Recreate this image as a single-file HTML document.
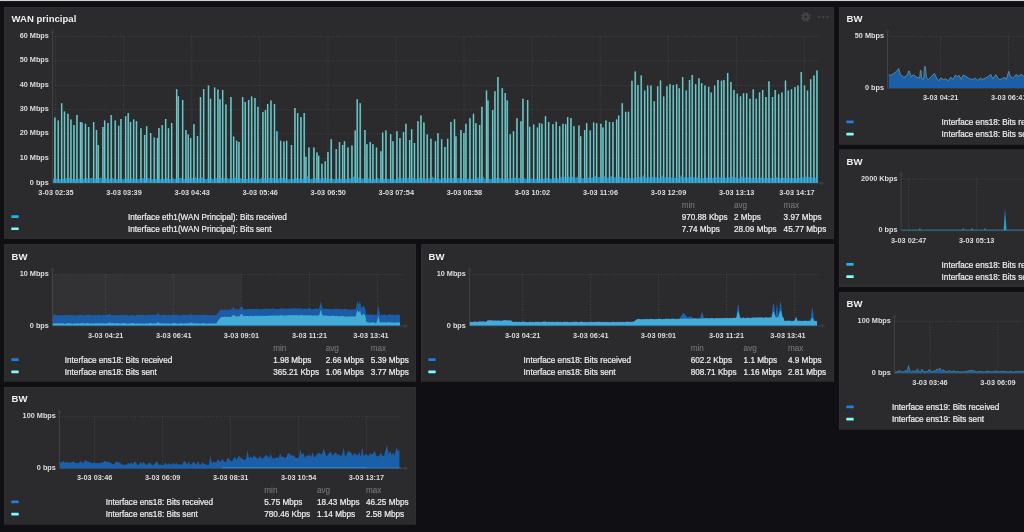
<!DOCTYPE html>
<html><head><meta charset="utf-8"><title>Dashboard</title>
<style>html,body{margin:0;padding:0;background:#100f13;overflow:hidden}svg{display:block;will-change:transform;transform:translateZ(0)}text{font-family:"Liberation Sans",sans-serif}</style></head>
<body>
<svg width="1024" height="532" viewBox="0 0 1024 532" font-family="Liberation Sans, sans-serif">
<rect x="0.00" y="0.00" width="1024.00" height="532.00" fill="#100f13" />
<rect x="0.00" y="0.00" width="1024.00" height="1.05" fill="#d2d0d4" />
<rect x="4.00" y="7.00" width="830.00" height="231.80" fill="#2b2a2d" />
<rect x="4.50" y="7.50" width="829.00" height="230.80" fill="none" stroke="#2f2e32" stroke-width="1"/>
<text x="11.60" y="22.10" font-size="9.55" fill="#f0f0f0" text-anchor="start" font-weight="bold" >WAN principal</text>
<circle cx="805.75" cy="16.9" r="3.5" fill="#454449"/>
<line x1="808.34" y1="17.97" x2="810.28" y2="18.78" stroke="#454449" stroke-width="1.7"/>
<line x1="806.82" y1="19.49" x2="807.63" y2="21.43" stroke="#454449" stroke-width="1.7"/>
<line x1="804.68" y1="19.49" x2="803.87" y2="21.43" stroke="#454449" stroke-width="1.7"/>
<line x1="803.16" y1="17.97" x2="801.22" y2="18.78" stroke="#454449" stroke-width="1.7"/>
<line x1="803.16" y1="15.83" x2="801.22" y2="15.02" stroke="#454449" stroke-width="1.7"/>
<line x1="804.68" y1="14.31" x2="803.87" y2="12.37" stroke="#454449" stroke-width="1.7"/>
<line x1="806.82" y1="14.31" x2="807.63" y2="12.37" stroke="#454449" stroke-width="1.7"/>
<line x1="808.34" y1="15.83" x2="810.28" y2="15.02" stroke="#454449" stroke-width="1.7"/>
<circle cx="805.75" cy="16.9" r="1.3" fill="#2b2a2d"/>
<circle cx="819.2" cy="17.0" r="1.25" fill="#41424a"/>
<circle cx="823.3" cy="17.0" r="1.25" fill="#41424a"/>
<circle cx="827.5" cy="17.0" r="1.25" fill="#41424a"/>
<line x1="52.60" y1="36.50" x2="818.00" y2="36.50" stroke="#4d4c50" stroke-width="0.8" stroke-dasharray="0.9 1.8"/>
<text x="48.90" y="37.90" font-size="7.32" fill="#dedede" text-anchor="end" font-weight="bold" >60 Mbps</text>
<line x1="52.60" y1="60.88" x2="818.00" y2="60.88" stroke="#4d4c50" stroke-width="0.8" stroke-dasharray="0.9 1.8"/>
<text x="48.90" y="62.28" font-size="7.32" fill="#dedede" text-anchor="end" font-weight="bold" >50 Mbps</text>
<line x1="52.60" y1="85.27" x2="818.00" y2="85.27" stroke="#4d4c50" stroke-width="0.8" stroke-dasharray="0.9 1.8"/>
<text x="48.90" y="86.67" font-size="7.32" fill="#dedede" text-anchor="end" font-weight="bold" >40 Mbps</text>
<line x1="52.60" y1="109.65" x2="818.00" y2="109.65" stroke="#4d4c50" stroke-width="0.8" stroke-dasharray="0.9 1.8"/>
<text x="48.90" y="111.05" font-size="7.32" fill="#dedede" text-anchor="end" font-weight="bold" >30 Mbps</text>
<line x1="52.60" y1="134.03" x2="818.00" y2="134.03" stroke="#4d4c50" stroke-width="0.8" stroke-dasharray="0.9 1.8"/>
<text x="48.90" y="135.43" font-size="7.32" fill="#dedede" text-anchor="end" font-weight="bold" >20 Mbps</text>
<line x1="52.60" y1="158.42" x2="818.00" y2="158.42" stroke="#4d4c50" stroke-width="0.8" stroke-dasharray="0.9 1.8"/>
<text x="48.90" y="159.82" font-size="7.32" fill="#dedede" text-anchor="end" font-weight="bold" >10 Mbps</text>
<text x="48.90" y="184.70" font-size="7.32" fill="#dedede" text-anchor="end" font-weight="bold" >0 bps</text>
<line x1="55.70" y1="36.50" x2="55.70" y2="182.80" stroke="#4d4c50" stroke-width="0.8" stroke-dasharray="0.9 1.8"/>
<line x1="123.76" y1="36.50" x2="123.76" y2="182.80" stroke="#4d4c50" stroke-width="0.8" stroke-dasharray="0.9 1.8"/>
<line x1="191.82" y1="36.50" x2="191.82" y2="182.80" stroke="#4d4c50" stroke-width="0.8" stroke-dasharray="0.9 1.8"/>
<line x1="259.88" y1="36.50" x2="259.88" y2="182.80" stroke="#4d4c50" stroke-width="0.8" stroke-dasharray="0.9 1.8"/>
<line x1="327.94" y1="36.50" x2="327.94" y2="182.80" stroke="#4d4c50" stroke-width="0.8" stroke-dasharray="0.9 1.8"/>
<line x1="396.00" y1="36.50" x2="396.00" y2="182.80" stroke="#4d4c50" stroke-width="0.8" stroke-dasharray="0.9 1.8"/>
<line x1="464.06" y1="36.50" x2="464.06" y2="182.80" stroke="#4d4c50" stroke-width="0.8" stroke-dasharray="0.9 1.8"/>
<line x1="532.12" y1="36.50" x2="532.12" y2="182.80" stroke="#4d4c50" stroke-width="0.8" stroke-dasharray="0.9 1.8"/>
<line x1="600.18" y1="36.50" x2="600.18" y2="182.80" stroke="#4d4c50" stroke-width="0.8" stroke-dasharray="0.9 1.8"/>
<line x1="668.24" y1="36.50" x2="668.24" y2="182.80" stroke="#4d4c50" stroke-width="0.8" stroke-dasharray="0.9 1.8"/>
<line x1="736.30" y1="36.50" x2="736.30" y2="182.80" stroke="#4d4c50" stroke-width="0.8" stroke-dasharray="0.9 1.8"/>
<line x1="804.36" y1="36.50" x2="804.36" y2="182.80" stroke="#4d4c50" stroke-width="0.8" stroke-dasharray="0.9 1.8"/>
<line x1="52.60" y1="31.50" x2="52.60" y2="183.30" stroke="#4a494d" stroke-width="0.8"/>
<path d="M51.00 32.30 L52.60 29.70 L54.20 32.30 Z" fill="#2b2a2d" stroke="#4a494d" stroke-width="0.6"/>
<line x1="52.60" y1="183.10" x2="822.00" y2="183.10" stroke="#4a494d" stroke-width="0.8"/>
<path d="M821.00 181.50 L823.80 183.10 L821.00 184.70 Z" fill="#2b2a2d" stroke="#4a494d" stroke-width="0.6"/>
<text x="56.00" y="194.90" font-size="7.32" fill="#dedede" text-anchor="middle" font-weight="bold" >3-03 02:35</text>
<text x="124.06" y="194.90" font-size="7.32" fill="#dedede" text-anchor="middle" font-weight="bold" >3-03 03:39</text>
<text x="192.12" y="194.90" font-size="7.32" fill="#dedede" text-anchor="middle" font-weight="bold" >3-03 04:43</text>
<text x="260.18" y="194.90" font-size="7.32" fill="#dedede" text-anchor="middle" font-weight="bold" >3-03 05:46</text>
<text x="328.24" y="194.90" font-size="7.32" fill="#dedede" text-anchor="middle" font-weight="bold" >3-03 06:50</text>
<text x="396.30" y="194.90" font-size="7.32" fill="#dedede" text-anchor="middle" font-weight="bold" >3-03 07:54</text>
<text x="464.36" y="194.90" font-size="7.32" fill="#dedede" text-anchor="middle" font-weight="bold" >3-03 08:58</text>
<text x="532.42" y="194.90" font-size="7.32" fill="#dedede" text-anchor="middle" font-weight="bold" >3-03 10:02</text>
<text x="600.48" y="194.90" font-size="7.32" fill="#dedede" text-anchor="middle" font-weight="bold" >3-03 11:06</text>
<text x="668.54" y="194.90" font-size="7.32" fill="#dedede" text-anchor="middle" font-weight="bold" >3-03 12:09</text>
<text x="736.60" y="194.90" font-size="7.32" fill="#dedede" text-anchor="middle" font-weight="bold" >3-03 13:13</text>
<text x="797.00" y="194.90" font-size="7.32" fill="#dedede" text-anchor="middle" font-weight="bold" >3-03 14:17</text>
<rect x="54.15" y="117.50" width="1.7" height="65.30" fill="#4a9fa2"/>
<rect x="54.55" y="117.50" width="0.7" height="65.30" fill="#86d6d4"/>
<rect x="57.40" y="120.50" width="1.7" height="62.30" fill="#4a9fa2"/>
<rect x="57.80" y="120.50" width="0.7" height="62.30" fill="#86d6d4"/>
<rect x="60.90" y="103.25" width="1.7" height="79.55" fill="#4a9fa2"/>
<rect x="61.30" y="103.25" width="0.7" height="79.55" fill="#86d6d4"/>
<rect x="63.65" y="111.50" width="1.7" height="71.30" fill="#4a9fa2"/>
<rect x="64.05" y="111.50" width="0.7" height="71.30" fill="#86d6d4"/>
<rect x="67.15" y="113.75" width="1.7" height="69.05" fill="#4a9fa2"/>
<rect x="67.55" y="113.75" width="0.7" height="69.05" fill="#86d6d4"/>
<rect x="70.15" y="119.50" width="1.7" height="63.30" fill="#4a9fa2"/>
<rect x="70.55" y="119.50" width="0.7" height="63.30" fill="#86d6d4"/>
<rect x="73.15" y="125.00" width="1.7" height="57.80" fill="#4a9fa2"/>
<rect x="73.55" y="125.00" width="0.7" height="57.80" fill="#86d6d4"/>
<rect x="76.15" y="115.00" width="1.7" height="67.80" fill="#4a9fa2"/>
<rect x="76.55" y="115.00" width="0.7" height="67.80" fill="#86d6d4"/>
<rect x="79.65" y="122.00" width="1.7" height="60.80" fill="#4a9fa2"/>
<rect x="80.05" y="122.00" width="0.7" height="60.80" fill="#86d6d4"/>
<rect x="81.15" y="122.50" width="1.7" height="60.30" fill="#4a9fa2"/>
<rect x="81.55" y="122.50" width="0.7" height="60.30" fill="#86d6d4"/>
<rect x="84.65" y="123.75" width="1.7" height="59.05" fill="#4a9fa2"/>
<rect x="85.05" y="123.75" width="0.7" height="59.05" fill="#86d6d4"/>
<rect x="87.90" y="127.00" width="1.7" height="55.80" fill="#4a9fa2"/>
<rect x="88.30" y="127.00" width="0.7" height="55.80" fill="#86d6d4"/>
<rect x="92.90" y="122.00" width="1.7" height="60.80" fill="#4a9fa2"/>
<rect x="93.30" y="122.00" width="0.7" height="60.80" fill="#86d6d4"/>
<rect x="95.65" y="130.00" width="1.7" height="52.80" fill="#4a9fa2"/>
<rect x="96.05" y="130.00" width="0.7" height="52.80" fill="#86d6d4"/>
<rect x="97.40" y="145.00" width="1.7" height="37.80" fill="#4a9fa2"/>
<rect x="97.80" y="145.00" width="0.7" height="37.80" fill="#86d6d4"/>
<rect x="102.15" y="127.00" width="1.7" height="55.80" fill="#4a9fa2"/>
<rect x="102.55" y="127.00" width="0.7" height="55.80" fill="#86d6d4"/>
<rect x="103.90" y="120.50" width="1.7" height="62.30" fill="#4a9fa2"/>
<rect x="104.30" y="120.50" width="0.7" height="62.30" fill="#86d6d4"/>
<rect x="107.15" y="123.00" width="1.7" height="59.80" fill="#4a9fa2"/>
<rect x="107.55" y="123.00" width="0.7" height="59.80" fill="#86d6d4"/>
<rect x="110.40" y="115.00" width="1.7" height="67.80" fill="#4a9fa2"/>
<rect x="110.80" y="115.00" width="0.7" height="67.80" fill="#86d6d4"/>
<rect x="114.40" y="120.50" width="1.7" height="62.30" fill="#4a9fa2"/>
<rect x="114.80" y="120.50" width="0.7" height="62.30" fill="#86d6d4"/>
<rect x="117.90" y="125.75" width="1.7" height="57.05" fill="#4a9fa2"/>
<rect x="118.30" y="125.75" width="0.7" height="57.05" fill="#86d6d4"/>
<rect x="120.15" y="119.00" width="1.7" height="63.80" fill="#4a9fa2"/>
<rect x="120.55" y="119.00" width="0.7" height="63.80" fill="#86d6d4"/>
<rect x="124.90" y="116.25" width="1.7" height="66.55" fill="#4a9fa2"/>
<rect x="125.30" y="116.25" width="0.7" height="66.55" fill="#86d6d4"/>
<rect x="127.40" y="113.00" width="1.7" height="69.80" fill="#4a9fa2"/>
<rect x="127.80" y="113.00" width="0.7" height="69.80" fill="#86d6d4"/>
<rect x="129.65" y="122.00" width="1.7" height="60.80" fill="#4a9fa2"/>
<rect x="130.05" y="122.00" width="0.7" height="60.80" fill="#86d6d4"/>
<rect x="132.90" y="119.50" width="1.7" height="63.30" fill="#4a9fa2"/>
<rect x="133.30" y="119.50" width="0.7" height="63.30" fill="#86d6d4"/>
<rect x="135.65" y="121.25" width="1.7" height="61.55" fill="#4a9fa2"/>
<rect x="136.05" y="121.25" width="0.7" height="61.55" fill="#86d6d4"/>
<rect x="140.15" y="128.25" width="1.7" height="54.55" fill="#4a9fa2"/>
<rect x="140.55" y="128.25" width="0.7" height="54.55" fill="#86d6d4"/>
<rect x="143.90" y="135.00" width="1.7" height="47.80" fill="#4a9fa2"/>
<rect x="144.30" y="135.00" width="0.7" height="47.80" fill="#86d6d4"/>
<rect x="145.90" y="126.25" width="1.7" height="56.55" fill="#4a9fa2"/>
<rect x="146.30" y="126.25" width="0.7" height="56.55" fill="#86d6d4"/>
<rect x="149.90" y="133.00" width="1.7" height="49.80" fill="#4a9fa2"/>
<rect x="150.30" y="133.00" width="0.7" height="49.80" fill="#86d6d4"/>
<rect x="153.40" y="137.50" width="1.7" height="45.30" fill="#4a9fa2"/>
<rect x="153.80" y="137.50" width="0.7" height="45.30" fill="#86d6d4"/>
<rect x="156.65" y="138.00" width="1.7" height="44.80" fill="#4a9fa2"/>
<rect x="157.05" y="138.00" width="0.7" height="44.80" fill="#86d6d4"/>
<rect x="158.15" y="128.00" width="1.7" height="54.80" fill="#4a9fa2"/>
<rect x="158.55" y="128.00" width="0.7" height="54.80" fill="#86d6d4"/>
<rect x="161.40" y="125.00" width="1.7" height="57.80" fill="#4a9fa2"/>
<rect x="161.80" y="125.00" width="0.7" height="57.80" fill="#86d6d4"/>
<rect x="164.90" y="119.00" width="1.7" height="63.80" fill="#4a9fa2"/>
<rect x="165.30" y="119.00" width="0.7" height="63.80" fill="#86d6d4"/>
<rect x="167.65" y="128.25" width="1.7" height="54.55" fill="#4a9fa2"/>
<rect x="168.05" y="128.25" width="0.7" height="54.55" fill="#86d6d4"/>
<rect x="170.90" y="123.00" width="1.7" height="59.80" fill="#4a9fa2"/>
<rect x="171.30" y="123.00" width="0.7" height="59.80" fill="#86d6d4"/>
<rect x="175.90" y="89.25" width="1.7" height="93.55" fill="#4a9fa2"/>
<rect x="176.30" y="89.25" width="0.7" height="93.55" fill="#86d6d4"/>
<rect x="177.40" y="96.25" width="1.7" height="86.55" fill="#4a9fa2"/>
<rect x="177.80" y="96.25" width="0.7" height="86.55" fill="#86d6d4"/>
<rect x="181.90" y="100.00" width="1.7" height="82.80" fill="#4a9fa2"/>
<rect x="182.30" y="100.00" width="0.7" height="82.80" fill="#86d6d4"/>
<rect x="185.15" y="130.00" width="1.7" height="52.80" fill="#4a9fa2"/>
<rect x="185.55" y="130.00" width="0.7" height="52.80" fill="#86d6d4"/>
<rect x="187.40" y="134.50" width="1.7" height="48.30" fill="#4a9fa2"/>
<rect x="187.80" y="134.50" width="0.7" height="48.30" fill="#86d6d4"/>
<rect x="189.90" y="138.00" width="1.7" height="44.80" fill="#4a9fa2"/>
<rect x="190.30" y="138.00" width="0.7" height="44.80" fill="#86d6d4"/>
<rect x="193.15" y="124.25" width="1.7" height="58.55" fill="#4a9fa2"/>
<rect x="193.55" y="124.25" width="0.7" height="58.55" fill="#86d6d4"/>
<rect x="196.65" y="136.00" width="1.7" height="46.80" fill="#4a9fa2"/>
<rect x="197.05" y="136.00" width="0.7" height="46.80" fill="#86d6d4"/>
<rect x="199.65" y="97.00" width="1.7" height="85.80" fill="#4a9fa2"/>
<rect x="200.05" y="97.00" width="0.7" height="85.80" fill="#86d6d4"/>
<rect x="202.90" y="89.00" width="1.7" height="93.80" fill="#4a9fa2"/>
<rect x="203.30" y="89.00" width="0.7" height="93.80" fill="#86d6d4"/>
<rect x="207.65" y="85.50" width="1.7" height="97.30" fill="#4a9fa2"/>
<rect x="208.05" y="85.50" width="0.7" height="97.30" fill="#86d6d4"/>
<rect x="209.65" y="98.75" width="1.7" height="84.05" fill="#4a9fa2"/>
<rect x="210.05" y="98.75" width="0.7" height="84.05" fill="#86d6d4"/>
<rect x="213.90" y="87.50" width="1.7" height="95.30" fill="#4a9fa2"/>
<rect x="214.30" y="87.50" width="0.7" height="95.30" fill="#86d6d4"/>
<rect x="217.15" y="89.50" width="1.7" height="93.30" fill="#4a9fa2"/>
<rect x="217.55" y="89.50" width="0.7" height="93.30" fill="#86d6d4"/>
<rect x="219.15" y="99.25" width="1.7" height="83.55" fill="#4a9fa2"/>
<rect x="219.55" y="99.25" width="0.7" height="83.55" fill="#86d6d4"/>
<rect x="221.90" y="90.00" width="1.7" height="92.80" fill="#4a9fa2"/>
<rect x="222.30" y="90.00" width="0.7" height="92.80" fill="#86d6d4"/>
<rect x="225.15" y="104.50" width="1.7" height="78.30" fill="#4a9fa2"/>
<rect x="225.55" y="104.50" width="0.7" height="78.30" fill="#86d6d4"/>
<rect x="230.15" y="97.00" width="1.7" height="85.80" fill="#4a9fa2"/>
<rect x="230.55" y="97.00" width="0.7" height="85.80" fill="#86d6d4"/>
<rect x="232.90" y="136.50" width="1.7" height="46.30" fill="#4a9fa2"/>
<rect x="233.30" y="136.50" width="0.7" height="46.30" fill="#86d6d4"/>
<rect x="235.90" y="140.75" width="1.7" height="42.05" fill="#4a9fa2"/>
<rect x="236.30" y="140.75" width="0.7" height="42.05" fill="#86d6d4"/>
<rect x="238.15" y="142.00" width="1.7" height="40.80" fill="#4a9fa2"/>
<rect x="238.55" y="142.00" width="0.7" height="40.80" fill="#86d6d4"/>
<rect x="241.90" y="97.00" width="1.7" height="85.80" fill="#4a9fa2"/>
<rect x="242.30" y="97.00" width="0.7" height="85.80" fill="#86d6d4"/>
<rect x="244.40" y="102.00" width="1.7" height="80.80" fill="#4a9fa2"/>
<rect x="244.80" y="102.00" width="0.7" height="80.80" fill="#86d6d4"/>
<rect x="247.90" y="100.00" width="1.7" height="82.80" fill="#4a9fa2"/>
<rect x="248.30" y="100.00" width="0.7" height="82.80" fill="#86d6d4"/>
<rect x="250.90" y="96.50" width="1.7" height="86.30" fill="#4a9fa2"/>
<rect x="251.30" y="96.50" width="0.7" height="86.30" fill="#86d6d4"/>
<rect x="254.15" y="98.00" width="1.7" height="84.80" fill="#4a9fa2"/>
<rect x="254.55" y="98.00" width="0.7" height="84.80" fill="#86d6d4"/>
<rect x="257.15" y="106.75" width="1.7" height="76.05" fill="#4a9fa2"/>
<rect x="257.55" y="106.75" width="0.7" height="76.05" fill="#86d6d4"/>
<rect x="262.15" y="112.00" width="1.7" height="70.80" fill="#4a9fa2"/>
<rect x="262.55" y="112.00" width="0.7" height="70.80" fill="#86d6d4"/>
<rect x="264.65" y="110.00" width="1.7" height="72.80" fill="#4a9fa2"/>
<rect x="265.05" y="110.00" width="0.7" height="72.80" fill="#86d6d4"/>
<rect x="266.90" y="104.00" width="1.7" height="78.80" fill="#4a9fa2"/>
<rect x="267.30" y="104.00" width="0.7" height="78.80" fill="#86d6d4"/>
<rect x="270.15" y="100.50" width="1.7" height="82.30" fill="#4a9fa2"/>
<rect x="270.55" y="100.50" width="0.7" height="82.30" fill="#86d6d4"/>
<rect x="273.65" y="104.00" width="1.7" height="78.80" fill="#4a9fa2"/>
<rect x="274.05" y="104.00" width="0.7" height="78.80" fill="#86d6d4"/>
<rect x="276.15" y="131.25" width="1.7" height="51.55" fill="#4a9fa2"/>
<rect x="276.55" y="131.25" width="0.7" height="51.55" fill="#86d6d4"/>
<rect x="279.90" y="140.75" width="1.7" height="42.05" fill="#4a9fa2"/>
<rect x="280.30" y="140.75" width="0.7" height="42.05" fill="#86d6d4"/>
<rect x="283.15" y="141.50" width="1.7" height="41.30" fill="#4a9fa2"/>
<rect x="283.55" y="141.50" width="0.7" height="41.30" fill="#86d6d4"/>
<rect x="285.90" y="140.75" width="1.7" height="42.05" fill="#4a9fa2"/>
<rect x="286.30" y="140.75" width="0.7" height="42.05" fill="#86d6d4"/>
<rect x="290.65" y="145.00" width="1.7" height="37.80" fill="#4a9fa2"/>
<rect x="291.05" y="145.00" width="0.7" height="37.80" fill="#86d6d4"/>
<rect x="294.15" y="108.00" width="1.7" height="74.80" fill="#4a9fa2"/>
<rect x="294.55" y="108.00" width="0.7" height="74.80" fill="#86d6d4"/>
<rect x="296.90" y="113.00" width="1.7" height="69.80" fill="#4a9fa2"/>
<rect x="297.30" y="113.00" width="0.7" height="69.80" fill="#86d6d4"/>
<rect x="300.15" y="117.00" width="1.7" height="65.80" fill="#4a9fa2"/>
<rect x="300.55" y="117.00" width="0.7" height="65.80" fill="#86d6d4"/>
<rect x="303.40" y="113.00" width="1.7" height="69.80" fill="#4a9fa2"/>
<rect x="303.80" y="113.00" width="0.7" height="69.80" fill="#86d6d4"/>
<rect x="305.15" y="156.75" width="1.7" height="26.05" fill="#4a9fa2"/>
<rect x="305.55" y="156.75" width="0.7" height="26.05" fill="#86d6d4"/>
<rect x="308.15" y="147.50" width="1.7" height="35.30" fill="#4a9fa2"/>
<rect x="308.55" y="147.50" width="0.7" height="35.30" fill="#86d6d4"/>
<rect x="313.15" y="147.50" width="1.7" height="35.30" fill="#4a9fa2"/>
<rect x="313.55" y="147.50" width="0.7" height="35.30" fill="#86d6d4"/>
<rect x="316.15" y="152.50" width="1.7" height="30.30" fill="#4a9fa2"/>
<rect x="316.55" y="152.50" width="0.7" height="30.30" fill="#86d6d4"/>
<rect x="317.90" y="155.75" width="1.7" height="27.05" fill="#4a9fa2"/>
<rect x="318.30" y="155.75" width="0.7" height="27.05" fill="#86d6d4"/>
<rect x="321.15" y="163.75" width="1.7" height="19.05" fill="#4a9fa2"/>
<rect x="321.55" y="163.75" width="0.7" height="19.05" fill="#86d6d4"/>
<rect x="324.40" y="161.25" width="1.7" height="21.55" fill="#4a9fa2"/>
<rect x="324.80" y="161.25" width="0.7" height="21.55" fill="#86d6d4"/>
<rect x="327.15" y="152.00" width="1.7" height="30.80" fill="#4a9fa2"/>
<rect x="327.55" y="152.00" width="0.7" height="30.80" fill="#86d6d4"/>
<rect x="330.40" y="139.25" width="1.7" height="43.55" fill="#4a9fa2"/>
<rect x="330.80" y="139.25" width="0.7" height="43.55" fill="#86d6d4"/>
<rect x="335.40" y="149.00" width="1.7" height="33.80" fill="#4a9fa2"/>
<rect x="335.80" y="149.00" width="0.7" height="33.80" fill="#86d6d4"/>
<rect x="338.65" y="142.00" width="1.7" height="40.80" fill="#4a9fa2"/>
<rect x="339.05" y="142.00" width="0.7" height="40.80" fill="#86d6d4"/>
<rect x="341.90" y="145.00" width="1.7" height="37.80" fill="#4a9fa2"/>
<rect x="342.30" y="145.00" width="0.7" height="37.80" fill="#86d6d4"/>
<rect x="343.65" y="141.25" width="1.7" height="41.55" fill="#4a9fa2"/>
<rect x="344.05" y="141.25" width="0.7" height="41.55" fill="#86d6d4"/>
<rect x="347.15" y="147.50" width="1.7" height="35.30" fill="#4a9fa2"/>
<rect x="347.55" y="147.50" width="0.7" height="35.30" fill="#86d6d4"/>
<rect x="351.15" y="145.50" width="1.7" height="37.30" fill="#4a9fa2"/>
<rect x="351.55" y="145.50" width="0.7" height="37.30" fill="#86d6d4"/>
<rect x="354.40" y="130.50" width="1.7" height="52.30" fill="#4a9fa2"/>
<rect x="354.80" y="130.50" width="0.7" height="52.30" fill="#86d6d4"/>
<rect x="356.40" y="99.25" width="1.7" height="83.55" fill="#4a9fa2"/>
<rect x="356.80" y="99.25" width="0.7" height="83.55" fill="#86d6d4"/>
<rect x="359.40" y="103.25" width="1.7" height="79.55" fill="#4a9fa2"/>
<rect x="359.80" y="103.25" width="0.7" height="79.55" fill="#86d6d4"/>
<rect x="364.15" y="130.00" width="1.7" height="52.80" fill="#4a9fa2"/>
<rect x="364.55" y="130.00" width="0.7" height="52.80" fill="#86d6d4"/>
<rect x="366.15" y="144.25" width="1.7" height="38.55" fill="#4a9fa2"/>
<rect x="366.55" y="144.25" width="0.7" height="38.55" fill="#86d6d4"/>
<rect x="369.40" y="142.00" width="1.7" height="40.80" fill="#4a9fa2"/>
<rect x="369.80" y="142.00" width="0.7" height="40.80" fill="#86d6d4"/>
<rect x="372.15" y="144.25" width="1.7" height="38.55" fill="#4a9fa2"/>
<rect x="372.55" y="144.25" width="0.7" height="38.55" fill="#86d6d4"/>
<rect x="375.65" y="147.50" width="1.7" height="35.30" fill="#4a9fa2"/>
<rect x="376.05" y="147.50" width="0.7" height="35.30" fill="#86d6d4"/>
<rect x="380.15" y="151.25" width="1.7" height="31.55" fill="#4a9fa2"/>
<rect x="380.55" y="151.25" width="0.7" height="31.55" fill="#86d6d4"/>
<rect x="381.90" y="132.50" width="1.7" height="50.30" fill="#4a9fa2"/>
<rect x="382.30" y="132.50" width="0.7" height="50.30" fill="#86d6d4"/>
<rect x="385.15" y="130.50" width="1.7" height="52.30" fill="#4a9fa2"/>
<rect x="385.55" y="130.50" width="0.7" height="52.30" fill="#86d6d4"/>
<rect x="389.90" y="134.25" width="1.7" height="48.55" fill="#4a9fa2"/>
<rect x="390.30" y="134.25" width="0.7" height="48.55" fill="#86d6d4"/>
<rect x="392.15" y="141.25" width="1.7" height="41.55" fill="#4a9fa2"/>
<rect x="392.55" y="141.25" width="0.7" height="41.55" fill="#86d6d4"/>
<rect x="396.15" y="131.25" width="1.7" height="51.55" fill="#4a9fa2"/>
<rect x="396.55" y="131.25" width="0.7" height="51.55" fill="#86d6d4"/>
<rect x="399.15" y="138.00" width="1.7" height="44.80" fill="#4a9fa2"/>
<rect x="399.55" y="138.00" width="0.7" height="44.80" fill="#86d6d4"/>
<rect x="402.65" y="132.00" width="1.7" height="50.80" fill="#4a9fa2"/>
<rect x="403.05" y="132.00" width="0.7" height="50.80" fill="#86d6d4"/>
<rect x="405.15" y="123.75" width="1.7" height="59.05" fill="#4a9fa2"/>
<rect x="405.55" y="123.75" width="0.7" height="59.05" fill="#86d6d4"/>
<rect x="408.90" y="140.00" width="1.7" height="42.80" fill="#4a9fa2"/>
<rect x="409.30" y="140.00" width="0.7" height="42.80" fill="#86d6d4"/>
<rect x="410.90" y="129.25" width="1.7" height="53.55" fill="#4a9fa2"/>
<rect x="411.30" y="129.25" width="0.7" height="53.55" fill="#86d6d4"/>
<rect x="413.65" y="143.00" width="1.7" height="39.80" fill="#4a9fa2"/>
<rect x="414.05" y="143.00" width="0.7" height="39.80" fill="#86d6d4"/>
<rect x="417.15" y="121.25" width="1.7" height="61.55" fill="#4a9fa2"/>
<rect x="417.55" y="121.25" width="0.7" height="61.55" fill="#86d6d4"/>
<rect x="420.15" y="115.50" width="1.7" height="67.30" fill="#4a9fa2"/>
<rect x="420.55" y="115.50" width="0.7" height="67.30" fill="#86d6d4"/>
<rect x="423.15" y="122.50" width="1.7" height="60.30" fill="#4a9fa2"/>
<rect x="423.55" y="122.50" width="0.7" height="60.30" fill="#86d6d4"/>
<rect x="426.40" y="134.50" width="1.7" height="48.30" fill="#4a9fa2"/>
<rect x="426.80" y="134.50" width="0.7" height="48.30" fill="#86d6d4"/>
<rect x="430.15" y="138.75" width="1.7" height="44.05" fill="#4a9fa2"/>
<rect x="430.55" y="138.75" width="0.7" height="44.05" fill="#86d6d4"/>
<rect x="434.65" y="141.25" width="1.7" height="41.55" fill="#4a9fa2"/>
<rect x="435.05" y="141.25" width="0.7" height="41.55" fill="#86d6d4"/>
<rect x="437.15" y="133.25" width="1.7" height="49.55" fill="#4a9fa2"/>
<rect x="437.55" y="133.25" width="0.7" height="49.55" fill="#86d6d4"/>
<rect x="440.90" y="139.25" width="1.7" height="43.55" fill="#4a9fa2"/>
<rect x="441.30" y="139.25" width="0.7" height="43.55" fill="#86d6d4"/>
<rect x="444.15" y="147.00" width="1.7" height="35.80" fill="#4a9fa2"/>
<rect x="444.55" y="147.00" width="0.7" height="35.80" fill="#86d6d4"/>
<rect x="446.90" y="138.75" width="1.7" height="44.05" fill="#4a9fa2"/>
<rect x="447.30" y="138.75" width="0.7" height="44.05" fill="#86d6d4"/>
<rect x="450.15" y="122.00" width="1.7" height="60.80" fill="#4a9fa2"/>
<rect x="450.55" y="122.00" width="0.7" height="60.80" fill="#86d6d4"/>
<rect x="453.65" y="119.25" width="1.7" height="63.55" fill="#4a9fa2"/>
<rect x="454.05" y="119.25" width="0.7" height="63.55" fill="#86d6d4"/>
<rect x="455.15" y="136.25" width="1.7" height="46.55" fill="#4a9fa2"/>
<rect x="455.55" y="136.25" width="0.7" height="46.55" fill="#86d6d4"/>
<rect x="460.15" y="130.00" width="1.7" height="52.80" fill="#4a9fa2"/>
<rect x="460.55" y="130.00" width="0.7" height="52.80" fill="#86d6d4"/>
<rect x="463.15" y="133.00" width="1.7" height="49.80" fill="#4a9fa2"/>
<rect x="463.55" y="133.00" width="0.7" height="49.80" fill="#86d6d4"/>
<rect x="465.15" y="123.75" width="1.7" height="59.05" fill="#4a9fa2"/>
<rect x="465.55" y="123.75" width="0.7" height="59.05" fill="#86d6d4"/>
<rect x="469.15" y="118.25" width="1.7" height="64.55" fill="#4a9fa2"/>
<rect x="469.55" y="118.25" width="0.7" height="64.55" fill="#86d6d4"/>
<rect x="472.65" y="113.75" width="1.7" height="69.05" fill="#4a9fa2"/>
<rect x="473.05" y="113.75" width="0.7" height="69.05" fill="#86d6d4"/>
<rect x="475.15" y="123.25" width="1.7" height="59.55" fill="#4a9fa2"/>
<rect x="475.55" y="123.25" width="0.7" height="59.55" fill="#86d6d4"/>
<rect x="478.90" y="125.00" width="1.7" height="57.80" fill="#4a9fa2"/>
<rect x="479.30" y="125.00" width="0.7" height="57.80" fill="#86d6d4"/>
<rect x="481.15" y="106.75" width="1.7" height="76.05" fill="#4a9fa2"/>
<rect x="481.55" y="106.75" width="0.7" height="76.05" fill="#86d6d4"/>
<rect x="485.65" y="90.50" width="1.7" height="92.30" fill="#4a9fa2"/>
<rect x="486.05" y="90.50" width="0.7" height="92.30" fill="#86d6d4"/>
<rect x="487.15" y="100.50" width="1.7" height="82.30" fill="#4a9fa2"/>
<rect x="487.55" y="100.50" width="0.7" height="82.30" fill="#86d6d4"/>
<rect x="491.90" y="110.00" width="1.7" height="72.80" fill="#4a9fa2"/>
<rect x="492.30" y="110.00" width="0.7" height="72.80" fill="#86d6d4"/>
<rect x="494.15" y="91.25" width="1.7" height="91.55" fill="#4a9fa2"/>
<rect x="494.55" y="91.25" width="0.7" height="91.55" fill="#86d6d4"/>
<rect x="497.15" y="77.00" width="1.7" height="105.80" fill="#4a9fa2"/>
<rect x="497.55" y="77.00" width="0.7" height="105.80" fill="#86d6d4"/>
<rect x="501.40" y="88.25" width="1.7" height="94.55" fill="#4a9fa2"/>
<rect x="501.80" y="88.25" width="0.7" height="94.55" fill="#86d6d4"/>
<rect x="504.40" y="93.00" width="1.7" height="89.80" fill="#4a9fa2"/>
<rect x="504.80" y="93.00" width="0.7" height="89.80" fill="#86d6d4"/>
<rect x="506.40" y="100.50" width="1.7" height="82.30" fill="#4a9fa2"/>
<rect x="506.80" y="100.50" width="0.7" height="82.30" fill="#86d6d4"/>
<rect x="509.40" y="134.25" width="1.7" height="48.55" fill="#4a9fa2"/>
<rect x="509.80" y="134.25" width="0.7" height="48.55" fill="#86d6d4"/>
<rect x="512.65" y="131.25" width="1.7" height="51.55" fill="#4a9fa2"/>
<rect x="513.05" y="131.25" width="0.7" height="51.55" fill="#86d6d4"/>
<rect x="516.15" y="118.25" width="1.7" height="64.55" fill="#4a9fa2"/>
<rect x="516.55" y="118.25" width="0.7" height="64.55" fill="#86d6d4"/>
<rect x="520.15" y="121.25" width="1.7" height="61.55" fill="#4a9fa2"/>
<rect x="520.55" y="121.25" width="0.7" height="61.55" fill="#86d6d4"/>
<rect x="522.15" y="98.75" width="1.7" height="84.05" fill="#4a9fa2"/>
<rect x="522.55" y="98.75" width="0.7" height="84.05" fill="#86d6d4"/>
<rect x="526.90" y="100.00" width="1.7" height="82.80" fill="#4a9fa2"/>
<rect x="527.30" y="100.00" width="0.7" height="82.80" fill="#86d6d4"/>
<rect x="528.90" y="126.75" width="1.7" height="56.05" fill="#4a9fa2"/>
<rect x="529.30" y="126.75" width="0.7" height="56.05" fill="#86d6d4"/>
<rect x="532.90" y="124.50" width="1.7" height="58.30" fill="#4a9fa2"/>
<rect x="533.30" y="124.50" width="0.7" height="58.30" fill="#86d6d4"/>
<rect x="536.65" y="127.50" width="1.7" height="55.30" fill="#4a9fa2"/>
<rect x="537.05" y="127.50" width="0.7" height="55.30" fill="#86d6d4"/>
<rect x="538.65" y="123.00" width="1.7" height="59.80" fill="#4a9fa2"/>
<rect x="539.05" y="123.00" width="0.7" height="59.80" fill="#86d6d4"/>
<rect x="541.15" y="123.75" width="1.7" height="59.05" fill="#4a9fa2"/>
<rect x="541.55" y="123.75" width="0.7" height="59.05" fill="#86d6d4"/>
<rect x="544.65" y="116.25" width="1.7" height="66.55" fill="#4a9fa2"/>
<rect x="545.05" y="116.25" width="0.7" height="66.55" fill="#86d6d4"/>
<rect x="547.90" y="122.00" width="1.7" height="60.80" fill="#4a9fa2"/>
<rect x="548.30" y="122.00" width="0.7" height="60.80" fill="#86d6d4"/>
<rect x="552.15" y="124.25" width="1.7" height="58.55" fill="#4a9fa2"/>
<rect x="552.55" y="124.25" width="0.7" height="58.55" fill="#86d6d4"/>
<rect x="555.40" y="121.75" width="1.7" height="61.05" fill="#4a9fa2"/>
<rect x="555.80" y="121.75" width="0.7" height="61.05" fill="#86d6d4"/>
<rect x="558.90" y="126.25" width="1.7" height="56.55" fill="#4a9fa2"/>
<rect x="559.30" y="126.25" width="0.7" height="56.55" fill="#86d6d4"/>
<rect x="562.15" y="123.75" width="1.7" height="59.05" fill="#4a9fa2"/>
<rect x="562.55" y="123.75" width="0.7" height="59.05" fill="#86d6d4"/>
<rect x="564.90" y="124.25" width="1.7" height="58.55" fill="#4a9fa2"/>
<rect x="565.30" y="124.25" width="0.7" height="58.55" fill="#86d6d4"/>
<rect x="566.90" y="117.00" width="1.7" height="65.80" fill="#4a9fa2"/>
<rect x="567.30" y="117.00" width="0.7" height="65.80" fill="#86d6d4"/>
<rect x="570.15" y="118.00" width="1.7" height="64.80" fill="#4a9fa2"/>
<rect x="570.55" y="118.00" width="0.7" height="64.80" fill="#86d6d4"/>
<rect x="573.15" y="126.25" width="1.7" height="56.55" fill="#4a9fa2"/>
<rect x="573.55" y="126.25" width="0.7" height="56.55" fill="#86d6d4"/>
<rect x="578.15" y="125.50" width="1.7" height="57.30" fill="#4a9fa2"/>
<rect x="578.55" y="125.50" width="0.7" height="57.30" fill="#86d6d4"/>
<rect x="579.90" y="136.25" width="1.7" height="46.55" fill="#4a9fa2"/>
<rect x="580.30" y="136.25" width="0.7" height="46.55" fill="#86d6d4"/>
<rect x="583.90" y="130.00" width="1.7" height="52.80" fill="#4a9fa2"/>
<rect x="584.30" y="130.00" width="0.7" height="52.80" fill="#86d6d4"/>
<rect x="585.90" y="123.25" width="1.7" height="59.55" fill="#4a9fa2"/>
<rect x="586.30" y="123.25" width="0.7" height="59.55" fill="#86d6d4"/>
<rect x="589.40" y="130.50" width="1.7" height="52.30" fill="#4a9fa2"/>
<rect x="589.80" y="130.50" width="0.7" height="52.30" fill="#86d6d4"/>
<rect x="592.90" y="122.50" width="1.7" height="60.30" fill="#4a9fa2"/>
<rect x="593.30" y="122.50" width="0.7" height="60.30" fill="#86d6d4"/>
<rect x="595.90" y="123.25" width="1.7" height="59.55" fill="#4a9fa2"/>
<rect x="596.30" y="123.25" width="0.7" height="59.55" fill="#86d6d4"/>
<rect x="600.15" y="123.75" width="1.7" height="59.05" fill="#4a9fa2"/>
<rect x="600.55" y="123.75" width="0.7" height="59.05" fill="#86d6d4"/>
<rect x="602.15" y="127.50" width="1.7" height="55.30" fill="#4a9fa2"/>
<rect x="602.55" y="127.50" width="0.7" height="55.30" fill="#86d6d4"/>
<rect x="605.15" y="120.50" width="1.7" height="62.30" fill="#4a9fa2"/>
<rect x="605.55" y="120.50" width="0.7" height="62.30" fill="#86d6d4"/>
<rect x="608.65" y="122.00" width="1.7" height="60.80" fill="#4a9fa2"/>
<rect x="609.05" y="122.00" width="0.7" height="60.80" fill="#86d6d4"/>
<rect x="612.15" y="122.00" width="1.7" height="60.80" fill="#4a9fa2"/>
<rect x="612.55" y="122.00" width="0.7" height="60.80" fill="#86d6d4"/>
<rect x="615.90" y="119.50" width="1.7" height="63.30" fill="#4a9fa2"/>
<rect x="616.30" y="119.50" width="0.7" height="63.30" fill="#86d6d4"/>
<rect x="617.90" y="115.50" width="1.7" height="67.30" fill="#4a9fa2"/>
<rect x="618.30" y="115.50" width="0.7" height="67.30" fill="#86d6d4"/>
<rect x="621.40" y="103.25" width="1.7" height="79.55" fill="#4a9fa2"/>
<rect x="621.80" y="103.25" width="0.7" height="79.55" fill="#86d6d4"/>
<rect x="624.90" y="111.75" width="1.7" height="71.05" fill="#4a9fa2"/>
<rect x="625.30" y="111.75" width="0.7" height="71.05" fill="#86d6d4"/>
<rect x="627.65" y="111.75" width="1.7" height="71.05" fill="#4a9fa2"/>
<rect x="628.05" y="111.75" width="0.7" height="71.05" fill="#86d6d4"/>
<rect x="631.15" y="80.75" width="1.7" height="102.05" fill="#4a9fa2"/>
<rect x="631.55" y="80.75" width="0.7" height="102.05" fill="#86d6d4"/>
<rect x="634.40" y="71.50" width="1.7" height="111.30" fill="#4a9fa2"/>
<rect x="634.80" y="71.50" width="0.7" height="111.30" fill="#86d6d4"/>
<rect x="637.15" y="85.00" width="1.7" height="97.80" fill="#4a9fa2"/>
<rect x="637.55" y="85.00" width="0.7" height="97.80" fill="#86d6d4"/>
<rect x="640.40" y="75.50" width="1.7" height="107.30" fill="#4a9fa2"/>
<rect x="640.80" y="75.50" width="0.7" height="107.30" fill="#86d6d4"/>
<rect x="643.90" y="90.50" width="1.7" height="92.30" fill="#4a9fa2"/>
<rect x="644.30" y="90.50" width="0.7" height="92.30" fill="#86d6d4"/>
<rect x="646.90" y="85.50" width="1.7" height="97.30" fill="#4a9fa2"/>
<rect x="647.30" y="85.50" width="0.7" height="97.30" fill="#86d6d4"/>
<rect x="650.15" y="85.50" width="1.7" height="97.30" fill="#4a9fa2"/>
<rect x="650.55" y="85.50" width="0.7" height="97.30" fill="#86d6d4"/>
<rect x="653.40" y="101.25" width="1.7" height="81.55" fill="#4a9fa2"/>
<rect x="653.80" y="101.25" width="0.7" height="81.55" fill="#86d6d4"/>
<rect x="656.90" y="86.25" width="1.7" height="96.55" fill="#4a9fa2"/>
<rect x="657.30" y="86.25" width="0.7" height="96.55" fill="#86d6d4"/>
<rect x="659.65" y="80.50" width="1.7" height="102.30" fill="#4a9fa2"/>
<rect x="660.05" y="80.50" width="0.7" height="102.30" fill="#86d6d4"/>
<rect x="662.90" y="96.50" width="1.7" height="86.30" fill="#4a9fa2"/>
<rect x="663.30" y="96.50" width="0.7" height="86.30" fill="#86d6d4"/>
<rect x="666.15" y="86.25" width="1.7" height="96.55" fill="#4a9fa2"/>
<rect x="666.55" y="86.25" width="0.7" height="96.55" fill="#86d6d4"/>
<rect x="669.15" y="84.25" width="1.7" height="98.55" fill="#4a9fa2"/>
<rect x="669.55" y="84.25" width="0.7" height="98.55" fill="#86d6d4"/>
<rect x="672.40" y="85.00" width="1.7" height="97.80" fill="#4a9fa2"/>
<rect x="672.80" y="85.00" width="0.7" height="97.80" fill="#86d6d4"/>
<rect x="675.90" y="84.25" width="1.7" height="98.55" fill="#4a9fa2"/>
<rect x="676.30" y="84.25" width="0.7" height="98.55" fill="#86d6d4"/>
<rect x="678.40" y="88.25" width="1.7" height="94.55" fill="#4a9fa2"/>
<rect x="678.80" y="88.25" width="0.7" height="94.55" fill="#86d6d4"/>
<rect x="681.90" y="77.00" width="1.7" height="105.80" fill="#4a9fa2"/>
<rect x="682.30" y="77.00" width="0.7" height="105.80" fill="#86d6d4"/>
<rect x="685.40" y="90.50" width="1.7" height="92.30" fill="#4a9fa2"/>
<rect x="685.80" y="90.50" width="0.7" height="92.30" fill="#86d6d4"/>
<rect x="688.65" y="80.00" width="1.7" height="102.80" fill="#4a9fa2"/>
<rect x="689.05" y="80.00" width="0.7" height="102.80" fill="#86d6d4"/>
<rect x="691.40" y="75.00" width="1.7" height="107.80" fill="#4a9fa2"/>
<rect x="691.80" y="75.00" width="0.7" height="107.80" fill="#86d6d4"/>
<rect x="694.90" y="84.25" width="1.7" height="98.55" fill="#4a9fa2"/>
<rect x="695.30" y="84.25" width="0.7" height="98.55" fill="#86d6d4"/>
<rect x="698.15" y="78.25" width="1.7" height="104.55" fill="#4a9fa2"/>
<rect x="698.55" y="78.25" width="0.7" height="104.55" fill="#86d6d4"/>
<rect x="700.90" y="83.25" width="1.7" height="99.55" fill="#4a9fa2"/>
<rect x="701.30" y="83.25" width="0.7" height="99.55" fill="#86d6d4"/>
<rect x="704.15" y="85.50" width="1.7" height="97.30" fill="#4a9fa2"/>
<rect x="704.55" y="85.50" width="0.7" height="97.30" fill="#86d6d4"/>
<rect x="707.90" y="86.75" width="1.7" height="96.05" fill="#4a9fa2"/>
<rect x="708.30" y="86.75" width="0.7" height="96.05" fill="#86d6d4"/>
<rect x="710.40" y="92.50" width="1.7" height="90.30" fill="#4a9fa2"/>
<rect x="710.80" y="92.50" width="0.7" height="90.30" fill="#86d6d4"/>
<rect x="713.90" y="85.50" width="1.7" height="97.30" fill="#4a9fa2"/>
<rect x="714.30" y="85.50" width="0.7" height="97.30" fill="#86d6d4"/>
<rect x="717.15" y="80.00" width="1.7" height="102.80" fill="#4a9fa2"/>
<rect x="717.55" y="80.00" width="0.7" height="102.80" fill="#86d6d4"/>
<rect x="720.65" y="80.75" width="1.7" height="102.05" fill="#4a9fa2"/>
<rect x="721.05" y="80.75" width="0.7" height="102.05" fill="#86d6d4"/>
<rect x="723.15" y="80.00" width="1.7" height="102.80" fill="#4a9fa2"/>
<rect x="723.55" y="80.00" width="0.7" height="102.80" fill="#86d6d4"/>
<rect x="726.90" y="73.00" width="1.7" height="109.80" fill="#4a9fa2"/>
<rect x="727.30" y="73.00" width="0.7" height="109.80" fill="#86d6d4"/>
<rect x="730.15" y="82.00" width="1.7" height="100.80" fill="#4a9fa2"/>
<rect x="730.55" y="82.00" width="0.7" height="100.80" fill="#86d6d4"/>
<rect x="733.15" y="90.00" width="1.7" height="92.80" fill="#4a9fa2"/>
<rect x="733.55" y="90.00" width="0.7" height="92.80" fill="#86d6d4"/>
<rect x="736.40" y="93.75" width="1.7" height="89.05" fill="#4a9fa2"/>
<rect x="736.80" y="93.75" width="0.7" height="89.05" fill="#86d6d4"/>
<rect x="739.65" y="96.25" width="1.7" height="86.55" fill="#4a9fa2"/>
<rect x="740.05" y="96.25" width="0.7" height="86.55" fill="#86d6d4"/>
<rect x="742.65" y="93.25" width="1.7" height="89.55" fill="#4a9fa2"/>
<rect x="743.05" y="93.25" width="0.7" height="89.55" fill="#86d6d4"/>
<rect x="745.90" y="93.25" width="1.7" height="89.55" fill="#4a9fa2"/>
<rect x="746.30" y="93.25" width="0.7" height="89.55" fill="#86d6d4"/>
<rect x="749.15" y="98.75" width="1.7" height="84.05" fill="#4a9fa2"/>
<rect x="749.55" y="98.75" width="0.7" height="84.05" fill="#86d6d4"/>
<rect x="752.40" y="89.25" width="1.7" height="93.55" fill="#4a9fa2"/>
<rect x="752.80" y="89.25" width="0.7" height="93.55" fill="#86d6d4"/>
<rect x="755.40" y="98.75" width="1.7" height="84.05" fill="#4a9fa2"/>
<rect x="755.80" y="98.75" width="0.7" height="84.05" fill="#86d6d4"/>
<rect x="758.65" y="92.50" width="1.7" height="90.30" fill="#4a9fa2"/>
<rect x="759.05" y="92.50" width="0.7" height="90.30" fill="#86d6d4"/>
<rect x="761.90" y="90.00" width="1.7" height="92.80" fill="#4a9fa2"/>
<rect x="762.30" y="90.00" width="0.7" height="92.80" fill="#86d6d4"/>
<rect x="765.15" y="97.00" width="1.7" height="85.80" fill="#4a9fa2"/>
<rect x="765.55" y="97.00" width="0.7" height="85.80" fill="#86d6d4"/>
<rect x="768.15" y="81.25" width="1.7" height="101.55" fill="#4a9fa2"/>
<rect x="768.55" y="81.25" width="0.7" height="101.55" fill="#86d6d4"/>
<rect x="771.65" y="97.00" width="1.7" height="85.80" fill="#4a9fa2"/>
<rect x="772.05" y="97.00" width="0.7" height="85.80" fill="#86d6d4"/>
<rect x="774.40" y="90.00" width="1.7" height="92.80" fill="#4a9fa2"/>
<rect x="774.80" y="90.00" width="0.7" height="92.80" fill="#86d6d4"/>
<rect x="777.90" y="94.25" width="1.7" height="88.55" fill="#4a9fa2"/>
<rect x="778.30" y="94.25" width="0.7" height="88.55" fill="#86d6d4"/>
<rect x="781.15" y="92.50" width="1.7" height="90.30" fill="#4a9fa2"/>
<rect x="781.55" y="92.50" width="0.7" height="90.30" fill="#86d6d4"/>
<rect x="784.65" y="80.50" width="1.7" height="102.30" fill="#4a9fa2"/>
<rect x="785.05" y="80.50" width="0.7" height="102.30" fill="#86d6d4"/>
<rect x="787.40" y="90.50" width="1.7" height="92.30" fill="#4a9fa2"/>
<rect x="787.80" y="90.50" width="0.7" height="92.30" fill="#86d6d4"/>
<rect x="790.65" y="89.25" width="1.7" height="93.55" fill="#4a9fa2"/>
<rect x="791.05" y="89.25" width="0.7" height="93.55" fill="#86d6d4"/>
<rect x="794.15" y="87.00" width="1.7" height="95.80" fill="#4a9fa2"/>
<rect x="794.55" y="87.00" width="0.7" height="95.80" fill="#86d6d4"/>
<rect x="797.15" y="85.50" width="1.7" height="97.30" fill="#4a9fa2"/>
<rect x="797.55" y="85.50" width="0.7" height="97.30" fill="#86d6d4"/>
<rect x="800.40" y="72.00" width="1.7" height="110.80" fill="#4a9fa2"/>
<rect x="800.80" y="72.00" width="0.7" height="110.80" fill="#86d6d4"/>
<rect x="803.65" y="85.50" width="1.7" height="97.30" fill="#4a9fa2"/>
<rect x="804.05" y="85.50" width="0.7" height="97.30" fill="#86d6d4"/>
<rect x="806.65" y="90.50" width="1.7" height="92.30" fill="#4a9fa2"/>
<rect x="807.05" y="90.50" width="0.7" height="92.30" fill="#86d6d4"/>
<rect x="809.90" y="79.25" width="1.7" height="103.55" fill="#4a9fa2"/>
<rect x="810.30" y="79.25" width="0.7" height="103.55" fill="#86d6d4"/>
<rect x="813.15" y="75.50" width="1.7" height="107.30" fill="#4a9fa2"/>
<rect x="813.55" y="75.50" width="0.7" height="107.30" fill="#86d6d4"/>
<rect x="816.15" y="70.50" width="1.7" height="112.30" fill="#4a9fa2"/>
<rect x="816.55" y="70.50" width="0.7" height="112.30" fill="#86d6d4"/>
<path d="M53.00 183.00 L53.00 178.72 L54.60 178.13 L56.20 178.34 L57.80 179.20 L59.40 179.23 L61.00 179.17 L62.60 178.54 L64.20 179.08 L65.80 178.17 L67.40 178.26 L69.00 177.54 L70.60 177.75 L72.20 179.04 L73.80 178.74 L75.40 178.97 L77.00 178.15 L78.60 178.31 L80.20 179.19 L81.80 178.08 L83.40 178.73 L85.00 178.48 L86.60 177.87 L88.20 178.86 L89.80 178.35 L91.40 177.99 L93.00 177.54 L94.60 178.55 L96.20 179.03 L97.80 179.23 L99.40 177.92 L101.00 177.72 L102.60 178.05 L104.20 178.26 L105.80 177.79 L107.40 178.45 L109.00 179.19 L110.60 178.14 L112.20 177.82 L113.80 178.61 L115.40 179.26 L117.00 179.00 L118.60 179.19 L120.20 179.07 L121.80 178.60 L123.40 179.15 L125.00 178.31 L126.60 177.83 L128.20 178.80 L129.80 178.65 L131.40 177.58 L133.00 178.98 L134.60 178.88 L136.20 178.24 L137.80 179.29 L139.40 178.64 L141.00 177.58 L142.60 178.37 L144.20 178.08 L145.80 177.68 L147.40 177.73 L149.00 178.59 L150.60 179.11 L152.20 179.19 L153.80 178.92 L155.40 178.69 L157.00 179.30 L158.60 179.12 L160.20 179.25 L161.80 178.19 L163.40 178.85 L165.00 178.64 L166.60 177.77 L168.20 178.46 L169.80 179.15 L171.40 178.68 L173.00 177.81 L174.60 179.26 L176.20 178.35 L177.80 176.32 L179.40 178.35 L181.00 177.75 L182.60 178.83 L184.20 179.00 L185.80 178.34 L187.40 178.71 L189.00 177.84 L190.60 177.77 L192.20 177.83 L193.80 178.89 L195.40 176.66 L197.00 179.25 L198.60 178.83 L200.20 177.58 L201.80 177.61 L203.40 177.58 L205.00 178.90 L206.60 178.95 L208.20 178.18 L209.80 177.79 L211.40 178.12 L213.00 179.15 L214.60 177.66 L216.20 177.95 L217.80 178.98 L219.40 178.70 L221.00 177.55 L222.60 178.58 L224.20 178.00 L225.80 179.07 L227.40 177.67 L229.00 179.04 L230.60 177.54 L232.20 178.67 L233.80 177.06 L235.40 177.55 L237.00 178.35 L238.60 178.52 L240.20 177.81 L241.80 178.85 L243.40 178.87 L245.00 178.83 L246.60 179.06 L248.20 178.66 L249.80 178.25 L251.40 178.54 L253.00 178.40 L254.60 176.36 L256.20 178.51 L257.80 179.29 L259.40 178.99 L261.00 177.99 L262.60 178.71 L264.20 178.30 L265.80 179.11 L267.40 178.85 L269.00 177.91 L270.60 178.29 L272.20 177.66 L273.80 178.20 L275.40 178.38 L277.00 178.49 L278.60 178.44 L280.20 178.04 L281.80 177.60 L283.40 178.29 L285.00 177.79 L286.60 179.08 L288.20 179.17 L289.80 179.17 L291.40 177.89 L293.00 179.02 L294.60 178.11 L296.20 177.71 L297.80 178.90 L299.40 178.58 L301.00 177.52 L302.60 179.01 L304.20 178.37 L305.80 178.95 L307.40 176.00 L309.00 178.30 L310.60 179.27 L312.20 178.18 L313.80 179.18 L315.40 177.88 L317.00 179.11 L318.60 179.23 L320.20 178.81 L321.80 178.54 L323.40 177.83 L325.00 179.03 L326.60 178.27 L328.20 179.14 L329.80 178.06 L331.40 179.17 L333.00 178.16 L334.60 179.15 L336.20 179.18 L337.80 178.48 L339.40 178.30 L341.00 178.82 L342.60 178.35 L344.20 179.10 L345.80 179.21 L347.40 178.74 L349.00 177.93 L350.60 178.40 L352.20 176.68 L353.80 176.85 L355.40 177.98 L357.00 178.96 L358.60 177.62 L360.20 177.83 L361.80 178.41 L363.40 178.59 L365.00 178.06 L366.60 178.68 L368.20 178.03 L369.80 178.57 L371.40 179.20 L373.00 179.17 L374.60 178.84 L376.20 179.15 L377.80 177.73 L379.40 178.79 L381.00 178.77 L382.60 179.02 L384.20 178.83 L385.80 177.55 L387.40 178.86 L389.00 178.74 L390.60 179.30 L392.20 178.45 L393.80 178.94 L395.40 179.29 L397.00 179.14 L398.60 177.22 L400.20 178.75 L401.80 178.25 L403.40 177.95 L405.00 178.01 L406.60 178.60 L408.20 177.53 L409.80 178.00 L411.40 179.22 L413.00 177.69 L414.60 177.98 L416.20 179.05 L417.80 178.39 L419.40 177.85 L421.00 178.25 L422.60 178.07 L424.20 176.89 L425.80 179.06 L427.40 179.11 L429.00 178.29 L430.60 178.17 L432.20 176.42 L433.80 177.86 L435.40 178.39 L437.00 178.11 L438.60 177.97 L440.20 179.17 L441.80 177.99 L443.40 177.97 L445.00 178.41 L446.60 178.44 L448.20 177.92 L449.80 178.14 L451.40 179.03 L453.00 177.96 L454.60 176.28 L456.20 179.19 L457.80 178.09 L459.40 178.08 L461.00 178.37 L462.60 178.46 L464.20 177.69 L465.80 177.54 L467.40 179.27 L469.00 177.82 L470.60 178.49 L472.20 178.92 L473.80 178.92 L475.40 179.04 L477.00 177.59 L478.60 177.82 L480.20 177.70 L481.80 178.88 L483.40 176.42 L485.00 179.29 L486.60 178.49 L488.20 179.05 L489.80 178.73 L491.40 179.30 L493.00 177.79 L494.60 177.63 L496.20 177.68 L497.80 178.63 L499.40 177.50 L501.00 178.65 L502.60 178.80 L504.20 179.12 L505.80 178.79 L507.40 178.85 L509.00 178.38 L510.60 178.63 L512.20 177.71 L513.80 178.16 L515.40 177.61 L517.00 178.00 L518.60 177.98 L520.20 177.95 L521.80 178.78 L523.40 177.63 L525.00 178.45 L526.60 178.76 L528.20 177.54 L529.80 178.12 L531.40 178.30 L533.00 179.00 L534.60 178.93 L536.20 178.41 L537.80 177.67 L539.40 178.49 L541.00 178.95 L542.60 178.68 L544.20 178.87 L545.80 178.27 L547.40 177.95 L549.00 178.56 L550.60 178.62 L552.20 179.19 L553.80 177.56 L555.40 178.39 L557.00 177.75 L558.60 178.81 L560.20 177.78 L561.80 176.78 L563.40 174.93 L565.00 178.44 L566.60 176.89 L568.20 175.44 L569.80 177.80 L571.40 177.01 L573.00 176.75 L574.60 178.30 L576.20 177.56 L577.80 176.81 L579.40 177.33 L581.00 177.68 L582.60 178.43 L584.20 178.08 L585.80 177.34 L587.40 178.27 L589.00 177.35 L590.60 178.30 L592.20 177.56 L593.80 177.80 L595.40 175.42 L597.00 177.96 L598.60 176.77 L600.20 176.91 L601.80 178.08 L603.40 176.77 L605.00 175.95 L606.60 177.60 L608.20 177.74 L609.80 177.30 L611.40 176.09 L613.00 177.89 L614.60 177.27 L616.20 177.07 L617.80 177.59 L619.40 176.75 L621.00 177.02 L622.60 178.10 L624.20 177.97 L625.80 177.61 L627.40 178.10 L629.00 177.30 L630.60 178.24 L632.20 178.12 L633.80 178.24 L635.40 178.39 L637.00 176.88 L638.60 177.18 L640.20 176.82 L641.80 178.17 L643.40 175.16 L645.00 177.30 L646.60 177.83 L648.20 176.20 L649.80 178.00 L651.40 176.78 L653.00 176.76 L654.60 177.86 L656.20 177.02 L657.80 178.41 L659.40 177.83 L661.00 178.15 L662.60 174.89 L664.20 177.76 L665.80 177.12 L667.40 178.44 L669.00 176.84 L670.60 177.15 L672.20 177.89 L673.80 176.78 L675.40 178.03 L677.00 177.93 L678.60 178.49 L680.20 176.85 L681.80 174.80 L683.40 178.08 L685.00 176.78 L686.60 177.80 L688.20 177.73 L689.80 176.83 L691.40 177.06 L693.00 177.02 L694.60 177.41 L696.20 177.92 L697.80 177.09 L699.40 178.14 L701.00 178.05 L702.60 178.44 L704.20 177.91 L705.80 176.91 L707.40 178.02 L709.00 178.33 L710.60 177.22 L712.20 178.08 L713.80 177.38 L715.40 177.15 L717.00 177.30 L718.60 176.99 L720.20 177.48 L721.80 177.17 L723.40 178.05 L725.00 178.22 L726.60 177.46 L728.20 177.79 L729.80 177.59 L731.40 177.04 L733.00 176.72 L734.60 177.65 L736.20 176.99 L737.80 178.43 L739.40 178.29 L741.00 176.75 L742.60 176.83 L744.20 176.94 L745.80 178.03 L747.40 176.80 L749.00 177.43 L750.60 178.11 L752.20 178.25 L753.80 178.04 L755.40 177.33 L757.00 178.48 L758.60 177.28 L760.20 177.94 L761.80 177.07 L763.40 178.39 L765.00 177.79 L766.60 177.35 L768.20 178.21 L769.80 177.76 L771.40 177.95 L773.00 177.94 L774.60 177.86 L776.20 176.94 L777.80 177.85 L779.40 177.19 L781.00 178.49 L782.60 177.74 L784.20 177.77 L785.80 177.67 L787.40 178.47 L789.00 177.35 L790.60 178.34 L792.20 177.83 L793.80 178.24 L795.40 177.56 L797.00 178.30 L798.60 177.05 L800.20 178.14 L801.80 176.80 L803.40 177.63 L805.00 176.83 L806.60 176.87 L808.20 177.02 L809.80 177.09 L811.40 177.77 L813.00 177.01 L814.60 178.11 L816.20 177.57 L817.80 178.28 L817.80 183.00 Z" fill="#2eaae0" fill-opacity="0.72"/>
<rect x="11.30" y="215.25" width="7.40" height="2.70" fill="#19b5ef" rx="0.6"/>
<rect x="11.30" y="227.40" width="7.40" height="2.70" fill="#7ffcff" rx="0.6"/>
<text x="128.00" y="219.60" font-size="8.16" fill="#ececec" text-anchor="start" font-weight="normal"  stroke="#ececec" stroke-width="0.22">Interface eth1(WAN Principal): Bits received</text>
<text x="128.00" y="232.00" font-size="8.16" fill="#ececec" text-anchor="start" font-weight="normal"  stroke="#ececec" stroke-width="0.22">Interface eth1(WAN Principal): Bits sent</text>
<text x="681.70" y="207.60" font-size="8.16" fill="#767579" text-anchor="start" font-weight="normal"  stroke="#767579" stroke-width="0.12">min</text>
<text x="734.00" y="207.60" font-size="8.16" fill="#767579" text-anchor="start" font-weight="normal"  stroke="#767579" stroke-width="0.12">avg</text>
<text x="783.60" y="207.60" font-size="8.16" fill="#767579" text-anchor="start" font-weight="normal"  stroke="#767579" stroke-width="0.12">max</text>
<text x="681.70" y="219.60" font-size="8.16" fill="#ececec" text-anchor="start" font-weight="normal"  stroke="#ececec" stroke-width="0.22">970.88 Kbps</text>
<text x="734.00" y="219.60" font-size="8.16" fill="#ececec" text-anchor="start" font-weight="normal"  stroke="#ececec" stroke-width="0.22">2 Mbps</text>
<text x="783.60" y="219.60" font-size="8.16" fill="#ececec" text-anchor="start" font-weight="normal"  stroke="#ececec" stroke-width="0.22">3.97 Mbps</text>
<text x="681.70" y="232.00" font-size="8.16" fill="#ececec" text-anchor="start" font-weight="normal"  stroke="#ececec" stroke-width="0.22">7.74 Mbps</text>
<text x="734.00" y="232.00" font-size="8.16" fill="#ececec" text-anchor="start" font-weight="normal"  stroke="#ececec" stroke-width="0.22">28.09 Mbps</text>
<text x="783.60" y="232.00" font-size="8.16" fill="#ececec" text-anchor="start" font-weight="normal"  stroke="#ececec" stroke-width="0.22">45.77 Mbps</text>
<rect x="4.00" y="244.00" width="412.00" height="137.50" fill="#2b2a2d" />
<rect x="4.50" y="244.50" width="411.00" height="136.50" fill="none" stroke="#2f2e32" stroke-width="1"/>
<text x="11.60" y="259.70" font-size="9.55" fill="#f0f0f0" text-anchor="start" font-weight="bold" >BW</text>
<line x1="52.40" y1="274.40" x2="402.00" y2="274.40" stroke="#4d4c50" stroke-width="0.8" stroke-dasharray="0.9 1.8"/>
<text x="48.90" y="275.80" font-size="7.32" fill="#dedede" text-anchor="end" font-weight="bold" >10 Mbps</text>
<text x="48.90" y="327.50" font-size="7.32" fill="#dedede" text-anchor="end" font-weight="bold" >0 bps</text>
<line x1="105.50" y1="274.40" x2="105.50" y2="325.60" stroke="#4d4c50" stroke-width="0.8" stroke-dasharray="0.9 1.8"/>
<text x="105.70" y="337.90" font-size="7.32" fill="#dedede" text-anchor="middle" font-weight="bold" >3-03 04:21</text>
<line x1="173.50" y1="274.40" x2="173.50" y2="325.60" stroke="#4d4c50" stroke-width="0.8" stroke-dasharray="0.9 1.8"/>
<text x="173.80" y="337.90" font-size="7.32" fill="#dedede" text-anchor="middle" font-weight="bold" >3-03 06:41</text>
<line x1="241.50" y1="274.40" x2="241.50" y2="325.60" stroke="#4d4c50" stroke-width="0.8" stroke-dasharray="0.9 1.8"/>
<text x="241.50" y="337.90" font-size="7.32" fill="#dedede" text-anchor="middle" font-weight="bold" >3-03 09:01</text>
<line x1="309.50" y1="274.40" x2="309.50" y2="325.60" stroke="#4d4c50" stroke-width="0.8" stroke-dasharray="0.9 1.8"/>
<text x="309.50" y="337.90" font-size="7.32" fill="#dedede" text-anchor="middle" font-weight="bold" >3-03 11:21</text>
<line x1="377.50" y1="274.40" x2="377.50" y2="325.60" stroke="#4d4c50" stroke-width="0.8" stroke-dasharray="0.9 1.8"/>
<text x="371.00" y="337.90" font-size="7.32" fill="#dedede" text-anchor="middle" font-weight="bold" >3-03 13:41</text>
<line x1="52.40" y1="269.40" x2="52.40" y2="326.10" stroke="#4a494d" stroke-width="0.8"/>
<path d="M50.80 270.20 L52.40 267.60 L54.00 270.20 Z" fill="#2b2a2d" stroke="#4a494d" stroke-width="0.6"/>
<line x1="52.40" y1="325.90" x2="406.00" y2="325.90" stroke="#4a494d" stroke-width="0.8"/>
<path d="M405.00 324.30 L407.80 325.90 L405.00 327.50 Z" fill="#2b2a2d" stroke="#4a494d" stroke-width="0.6"/>
<rect x="11.30" y="358.20" width="7.40" height="2.70" fill="#1f7fe0" rx="0.6"/>
<rect x="11.30" y="370.45" width="7.40" height="2.70" fill="#7ffcff" rx="0.6"/>
<text x="64.80" y="362.60" font-size="8.16" fill="#ececec" text-anchor="start" font-weight="normal"  stroke="#ececec" stroke-width="0.22">Interface ens18: Bits received</text>
<text x="64.80" y="374.85" font-size="8.16" fill="#ececec" text-anchor="start" font-weight="normal"  stroke="#ececec" stroke-width="0.22">Interface ens18: Bits sent</text>
<text x="273.20" y="350.50" font-size="8.16" fill="#767579" text-anchor="start" font-weight="normal"  stroke="#767579" stroke-width="0.12">min</text>
<text x="325.70" y="350.50" font-size="8.16" fill="#767579" text-anchor="start" font-weight="normal"  stroke="#767579" stroke-width="0.12">avg</text>
<text x="370.70" y="350.50" font-size="8.16" fill="#767579" text-anchor="start" font-weight="normal"  stroke="#767579" stroke-width="0.12">max</text>
<text x="273.20" y="362.60" font-size="8.16" fill="#ececec" text-anchor="start" font-weight="normal"  stroke="#ececec" stroke-width="0.22">1.98 Mbps</text>
<text x="325.70" y="362.60" font-size="8.16" fill="#ececec" text-anchor="start" font-weight="normal"  stroke="#ececec" stroke-width="0.22">2.66 Mbps</text>
<text x="370.70" y="362.60" font-size="8.16" fill="#ececec" text-anchor="start" font-weight="normal"  stroke="#ececec" stroke-width="0.22">5.39 Mbps</text>
<text x="273.20" y="374.85" font-size="8.16" fill="#ececec" text-anchor="start" font-weight="normal"  stroke="#ececec" stroke-width="0.22">365.21 Kbps</text>
<text x="325.70" y="374.85" font-size="8.16" fill="#ececec" text-anchor="start" font-weight="normal"  stroke="#ececec" stroke-width="0.22">1.06 Mbps</text>
<text x="370.70" y="374.85" font-size="8.16" fill="#ececec" text-anchor="start" font-weight="normal"  stroke="#ececec" stroke-width="0.22">3.77 Mbps</text>
<rect x="421.00" y="244.00" width="413.00" height="137.50" fill="#2b2a2d" />
<rect x="421.50" y="244.50" width="412.00" height="136.50" fill="none" stroke="#2f2e32" stroke-width="1"/>
<text x="428.60" y="259.70" font-size="9.55" fill="#f0f0f0" text-anchor="start" font-weight="bold" >BW</text>
<line x1="469.40" y1="274.40" x2="819.00" y2="274.40" stroke="#4d4c50" stroke-width="0.8" stroke-dasharray="0.9 1.8"/>
<text x="465.90" y="275.80" font-size="7.32" fill="#dedede" text-anchor="end" font-weight="bold" >10 Mbps</text>
<text x="465.90" y="327.50" font-size="7.32" fill="#dedede" text-anchor="end" font-weight="bold" >0 bps</text>
<line x1="522.50" y1="274.40" x2="522.50" y2="325.60" stroke="#4d4c50" stroke-width="0.8" stroke-dasharray="0.9 1.8"/>
<text x="522.70" y="337.90" font-size="7.32" fill="#dedede" text-anchor="middle" font-weight="bold" >3-03 04:21</text>
<line x1="590.50" y1="274.40" x2="590.50" y2="325.60" stroke="#4d4c50" stroke-width="0.8" stroke-dasharray="0.9 1.8"/>
<text x="590.80" y="337.90" font-size="7.32" fill="#dedede" text-anchor="middle" font-weight="bold" >3-03 06:41</text>
<line x1="658.50" y1="274.40" x2="658.50" y2="325.60" stroke="#4d4c50" stroke-width="0.8" stroke-dasharray="0.9 1.8"/>
<text x="658.50" y="337.90" font-size="7.32" fill="#dedede" text-anchor="middle" font-weight="bold" >3-03 09:01</text>
<line x1="726.50" y1="274.40" x2="726.50" y2="325.60" stroke="#4d4c50" stroke-width="0.8" stroke-dasharray="0.9 1.8"/>
<text x="726.50" y="337.90" font-size="7.32" fill="#dedede" text-anchor="middle" font-weight="bold" >3-03 11:21</text>
<line x1="794.50" y1="274.40" x2="794.50" y2="325.60" stroke="#4d4c50" stroke-width="0.8" stroke-dasharray="0.9 1.8"/>
<text x="788.00" y="337.90" font-size="7.32" fill="#dedede" text-anchor="middle" font-weight="bold" >3-03 13:41</text>
<line x1="469.40" y1="269.40" x2="469.40" y2="326.10" stroke="#4a494d" stroke-width="0.8"/>
<path d="M467.80 270.20 L469.40 267.60 L471.00 270.20 Z" fill="#2b2a2d" stroke="#4a494d" stroke-width="0.6"/>
<line x1="469.40" y1="325.90" x2="823.00" y2="325.90" stroke="#4a494d" stroke-width="0.8"/>
<path d="M822.00 324.30 L824.80 325.90 L822.00 327.50 Z" fill="#2b2a2d" stroke="#4a494d" stroke-width="0.6"/>
<rect x="428.30" y="358.20" width="7.40" height="2.70" fill="#1f7fe0" rx="0.6"/>
<rect x="428.30" y="370.45" width="7.40" height="2.70" fill="#7ffcff" rx="0.6"/>
<text x="523.60" y="362.60" font-size="8.16" fill="#ececec" text-anchor="start" font-weight="normal"  stroke="#ececec" stroke-width="0.22">Interface ens18: Bits received</text>
<text x="523.60" y="374.85" font-size="8.16" fill="#ececec" text-anchor="start" font-weight="normal"  stroke="#ececec" stroke-width="0.22">Interface ens18: Bits sent</text>
<text x="690.70" y="350.50" font-size="8.16" fill="#767579" text-anchor="start" font-weight="normal"  stroke="#767579" stroke-width="0.12">min</text>
<text x="743.60" y="350.50" font-size="8.16" fill="#767579" text-anchor="start" font-weight="normal"  stroke="#767579" stroke-width="0.12">avg</text>
<text x="788.00" y="350.50" font-size="8.16" fill="#767579" text-anchor="start" font-weight="normal"  stroke="#767579" stroke-width="0.12">max</text>
<text x="690.70" y="362.60" font-size="8.16" fill="#ececec" text-anchor="start" font-weight="normal"  stroke="#ececec" stroke-width="0.22">602.2 Kbps</text>
<text x="743.60" y="362.60" font-size="8.16" fill="#ececec" text-anchor="start" font-weight="normal"  stroke="#ececec" stroke-width="0.22">1.1 Mbps</text>
<text x="788.00" y="362.60" font-size="8.16" fill="#ececec" text-anchor="start" font-weight="normal"  stroke="#ececec" stroke-width="0.22">4.9 Mbps</text>
<text x="690.70" y="374.85" font-size="8.16" fill="#ececec" text-anchor="start" font-weight="normal"  stroke="#ececec" stroke-width="0.22">808.71 Kbps</text>
<text x="743.60" y="374.85" font-size="8.16" fill="#ececec" text-anchor="start" font-weight="normal"  stroke="#ececec" stroke-width="0.22">1.16 Mbps</text>
<text x="788.00" y="374.85" font-size="8.16" fill="#ececec" text-anchor="start" font-weight="normal"  stroke="#ececec" stroke-width="0.22">2.81 Mbps</text>
<rect x="4.00" y="387.00" width="412.00" height="137.50" fill="#2b2a2d" />
<rect x="4.50" y="387.50" width="411.00" height="136.50" fill="none" stroke="#2f2e32" stroke-width="1"/>
<text x="11.60" y="402.10" font-size="9.55" fill="#f0f0f0" text-anchor="start" font-weight="bold" >BW</text>
<line x1="59.40" y1="416.70" x2="402.00" y2="416.70" stroke="#4d4c50" stroke-width="0.8" stroke-dasharray="0.9 1.8"/>
<text x="55.90" y="418.10" font-size="7.32" fill="#dedede" text-anchor="end" font-weight="bold" >100 Mbps</text>
<text x="55.90" y="470.00" font-size="7.32" fill="#dedede" text-anchor="end" font-weight="bold" >0 bps</text>
<line x1="94.50" y1="416.70" x2="94.50" y2="468.10" stroke="#4d4c50" stroke-width="0.8" stroke-dasharray="0.9 1.8"/>
<text x="94.70" y="480.40" font-size="7.32" fill="#dedede" text-anchor="middle" font-weight="bold" >3-03 03:46</text>
<line x1="162.50" y1="416.70" x2="162.50" y2="468.10" stroke="#4d4c50" stroke-width="0.8" stroke-dasharray="0.9 1.8"/>
<text x="162.70" y="480.40" font-size="7.32" fill="#dedede" text-anchor="middle" font-weight="bold" >3-03 06:09</text>
<line x1="230.50" y1="416.70" x2="230.50" y2="468.10" stroke="#4d4c50" stroke-width="0.8" stroke-dasharray="0.9 1.8"/>
<text x="230.60" y="480.40" font-size="7.32" fill="#dedede" text-anchor="middle" font-weight="bold" >3-03 08:31</text>
<line x1="298.50" y1="416.70" x2="298.50" y2="468.10" stroke="#4d4c50" stroke-width="0.8" stroke-dasharray="0.9 1.8"/>
<text x="298.60" y="480.40" font-size="7.32" fill="#dedede" text-anchor="middle" font-weight="bold" >3-03 10:54</text>
<line x1="366.50" y1="416.70" x2="366.50" y2="468.10" stroke="#4d4c50" stroke-width="0.8" stroke-dasharray="0.9 1.8"/>
<text x="366.50" y="480.40" font-size="7.32" fill="#dedede" text-anchor="middle" font-weight="bold" >3-03 13:17</text>
<line x1="59.40" y1="411.70" x2="59.40" y2="468.60" stroke="#4a494d" stroke-width="0.8"/>
<path d="M57.80 412.50 L59.40 409.90 L61.00 412.50 Z" fill="#2b2a2d" stroke="#4a494d" stroke-width="0.6"/>
<line x1="59.40" y1="468.40" x2="406.00" y2="468.40" stroke="#4a494d" stroke-width="0.8"/>
<path d="M405.00 466.80 L407.80 468.40 L405.00 470.00 Z" fill="#2b2a2d" stroke="#4a494d" stroke-width="0.6"/>
<rect x="11.30" y="500.60" width="7.40" height="2.70" fill="#1f7fe0" rx="0.6"/>
<rect x="11.30" y="512.85" width="7.40" height="2.70" fill="#7ffcff" rx="0.6"/>
<text x="105.70" y="505.00" font-size="8.16" fill="#ececec" text-anchor="start" font-weight="normal"  stroke="#ececec" stroke-width="0.22">Interface ens18: Bits received</text>
<text x="105.70" y="517.25" font-size="8.16" fill="#ececec" text-anchor="start" font-weight="normal"  stroke="#ececec" stroke-width="0.22">Interface ens18: Bits sent</text>
<text x="264.30" y="492.90" font-size="8.16" fill="#767579" text-anchor="start" font-weight="normal"  stroke="#767579" stroke-width="0.12">min</text>
<text x="317.00" y="492.90" font-size="8.16" fill="#767579" text-anchor="start" font-weight="normal"  stroke="#767579" stroke-width="0.12">avg</text>
<text x="366.00" y="492.90" font-size="8.16" fill="#767579" text-anchor="start" font-weight="normal"  stroke="#767579" stroke-width="0.12">max</text>
<text x="264.30" y="505.00" font-size="8.16" fill="#ececec" text-anchor="start" font-weight="normal"  stroke="#ececec" stroke-width="0.22">5.75 Mbps</text>
<text x="317.00" y="505.00" font-size="8.16" fill="#ececec" text-anchor="start" font-weight="normal"  stroke="#ececec" stroke-width="0.22">18.43 Mbps</text>
<text x="366.00" y="505.00" font-size="8.16" fill="#ececec" text-anchor="start" font-weight="normal"  stroke="#ececec" stroke-width="0.22">46.25 Mbps</text>
<text x="264.30" y="517.25" font-size="8.16" fill="#ececec" text-anchor="start" font-weight="normal"  stroke="#ececec" stroke-width="0.22">780.46 Kbps</text>
<text x="317.00" y="517.25" font-size="8.16" fill="#ececec" text-anchor="start" font-weight="normal"  stroke="#ececec" stroke-width="0.22">1.14 Mbps</text>
<text x="366.00" y="517.25" font-size="8.16" fill="#ececec" text-anchor="start" font-weight="normal"  stroke="#ececec" stroke-width="0.22">2.58 Mbps</text>
<rect x="839.00" y="7.00" width="200.00" height="137.50" fill="#2b2a2d" />
<rect x="839.50" y="7.50" width="199.00" height="136.50" fill="none" stroke="#2f2e32" stroke-width="1"/>
<text x="846.60" y="22.10" font-size="9.55" fill="#f0f0f0" text-anchor="start" font-weight="bold" >BW</text>
<line x1="887.50" y1="36.40" x2="1040.00" y2="36.40" stroke="#4d4c50" stroke-width="0.8" stroke-dasharray="0.9 1.8"/>
<text x="884.00" y="37.80" font-size="7.32" fill="#dedede" text-anchor="end" font-weight="bold" >50 Mbps</text>
<text x="884.00" y="89.80" font-size="7.32" fill="#dedede" text-anchor="end" font-weight="bold" >0 bps</text>
<line x1="940.50" y1="36.40" x2="940.50" y2="87.90" stroke="#4d4c50" stroke-width="0.8" stroke-dasharray="0.9 1.8"/>
<text x="940.70" y="100.20" font-size="7.32" fill="#dedede" text-anchor="middle" font-weight="bold" >3-03 04:21</text>
<line x1="1008.50" y1="36.40" x2="1008.50" y2="87.90" stroke="#4d4c50" stroke-width="0.8" stroke-dasharray="0.9 1.8"/>
<text x="1008.80" y="100.20" font-size="7.32" fill="#dedede" text-anchor="middle" font-weight="bold" >3-03 06:41</text>
<line x1="887.50" y1="31.40" x2="887.50" y2="88.40" stroke="#4a494d" stroke-width="0.8"/>
<path d="M885.90 32.20 L887.50 29.60 L889.10 32.20 Z" fill="#2b2a2d" stroke="#4a494d" stroke-width="0.6"/>
<line x1="887.50" y1="88.20" x2="1044.00" y2="88.20" stroke="#4a494d" stroke-width="0.8"/>
<path d="M1043.00 86.60 L1045.80 88.20 L1043.00 89.80 Z" fill="#2b2a2d" stroke="#4a494d" stroke-width="0.6"/>
<rect x="846.30" y="120.60" width="7.40" height="2.70" fill="#1f7fe0" rx="0.6"/>
<rect x="846.30" y="132.85" width="7.40" height="2.70" fill="#7ffcff" rx="0.6"/>
<text x="941.60" y="125.00" font-size="8.16" fill="#ececec" text-anchor="start" font-weight="normal"  stroke="#ececec" stroke-width="0.22">Interface ens18: Bits received</text>
<text x="941.60" y="137.25" font-size="8.16" fill="#ececec" text-anchor="start" font-weight="normal"  stroke="#ececec" stroke-width="0.22">Interface ens18: Bits sent</text>
<rect x="839.00" y="149.50" width="200.00" height="137.50" fill="#2b2a2d" />
<rect x="839.50" y="150.00" width="199.00" height="136.50" fill="none" stroke="#2f2e32" stroke-width="1"/>
<text x="846.60" y="164.60" font-size="9.55" fill="#f0f0f0" text-anchor="start" font-weight="bold" >BW</text>
<line x1="901.10" y1="179.10" x2="1040.00" y2="179.10" stroke="#4d4c50" stroke-width="0.8" stroke-dasharray="0.9 1.8"/>
<text x="897.60" y="180.50" font-size="7.32" fill="#dedede" text-anchor="end" font-weight="bold" >2000 Kbps</text>
<text x="897.60" y="232.30" font-size="7.32" fill="#dedede" text-anchor="end" font-weight="bold" >0 bps</text>
<line x1="908.50" y1="179.10" x2="908.50" y2="230.40" stroke="#4d4c50" stroke-width="0.8" stroke-dasharray="0.9 1.8"/>
<text x="908.70" y="242.70" font-size="7.32" fill="#dedede" text-anchor="middle" font-weight="bold" >3-03 02:47</text>
<line x1="976.50" y1="179.10" x2="976.50" y2="230.40" stroke="#4d4c50" stroke-width="0.8" stroke-dasharray="0.9 1.8"/>
<text x="976.70" y="242.70" font-size="7.32" fill="#dedede" text-anchor="middle" font-weight="bold" >3-03 05:13</text>
<line x1="901.10" y1="174.10" x2="901.10" y2="230.90" stroke="#4a494d" stroke-width="0.8"/>
<path d="M899.50 174.90 L901.10 172.30 L902.70 174.90 Z" fill="#2b2a2d" stroke="#4a494d" stroke-width="0.6"/>
<line x1="901.10" y1="230.70" x2="1044.00" y2="230.70" stroke="#4a494d" stroke-width="0.8"/>
<path d="M1043.00 229.10 L1045.80 230.70 L1043.00 232.30 Z" fill="#2b2a2d" stroke="#4a494d" stroke-width="0.6"/>
<rect x="846.30" y="263.10" width="7.40" height="2.70" fill="#19b5ef" rx="0.6"/>
<rect x="846.30" y="275.35" width="7.40" height="2.70" fill="#7ffcff" rx="0.6"/>
<text x="941.60" y="267.50" font-size="8.16" fill="#ececec" text-anchor="start" font-weight="normal"  stroke="#ececec" stroke-width="0.22">Interface ens18: Bits received</text>
<text x="941.60" y="279.75" font-size="8.16" fill="#ececec" text-anchor="start" font-weight="normal"  stroke="#ececec" stroke-width="0.22">Interface ens18: Bits sent</text>
<rect x="839.00" y="292.00" width="200.00" height="137.50" fill="#2b2a2d" />
<rect x="839.50" y="292.50" width="199.00" height="136.50" fill="none" stroke="#2f2e32" stroke-width="1"/>
<text x="846.60" y="307.10" font-size="9.55" fill="#f0f0f0" text-anchor="start" font-weight="bold" >BW</text>
<line x1="894.40" y1="321.50" x2="1040.00" y2="321.50" stroke="#4d4c50" stroke-width="0.8" stroke-dasharray="0.9 1.8"/>
<text x="890.90" y="322.90" font-size="7.32" fill="#dedede" text-anchor="end" font-weight="bold" >100 Mbps</text>
<text x="890.90" y="374.80" font-size="7.32" fill="#dedede" text-anchor="end" font-weight="bold" >0 bps</text>
<line x1="929.80" y1="321.50" x2="929.80" y2="372.90" stroke="#4d4c50" stroke-width="0.8" stroke-dasharray="0.9 1.8"/>
<text x="930.00" y="385.20" font-size="7.32" fill="#dedede" text-anchor="middle" font-weight="bold" >3-03 03:46</text>
<line x1="997.80" y1="321.50" x2="997.80" y2="372.90" stroke="#4d4c50" stroke-width="0.8" stroke-dasharray="0.9 1.8"/>
<text x="998.00" y="385.20" font-size="7.32" fill="#dedede" text-anchor="middle" font-weight="bold" >3-03 06:09</text>
<line x1="894.40" y1="316.50" x2="894.40" y2="373.40" stroke="#4a494d" stroke-width="0.8"/>
<path d="M892.80 317.30 L894.40 314.70 L896.00 317.30 Z" fill="#2b2a2d" stroke="#4a494d" stroke-width="0.6"/>
<line x1="894.40" y1="373.20" x2="1044.00" y2="373.20" stroke="#4a494d" stroke-width="0.8"/>
<path d="M1043.00 371.60 L1045.80 373.20 L1043.00 374.80 Z" fill="#2b2a2d" stroke="#4a494d" stroke-width="0.6"/>
<rect x="846.30" y="405.60" width="7.40" height="2.70" fill="#1f7fe0" rx="0.6"/>
<rect x="846.30" y="417.85" width="7.40" height="2.70" fill="#7ffcff" rx="0.6"/>
<text x="891.90" y="410.00" font-size="8.16" fill="#ececec" text-anchor="start" font-weight="normal"  stroke="#ececec" stroke-width="0.22">Interface ens19: Bits received</text>
<text x="891.90" y="422.25" font-size="8.16" fill="#ececec" text-anchor="start" font-weight="normal"  stroke="#ececec" stroke-width="0.22">Interface ens19: Bits sent</text>
<rect x="52.30" y="274.50" width="189.00" height="50.70" fill="#ffffff" fill-opacity="0.035"/>
<path d="M52.80 325.40 L52.80 314.71 L53.60 314.86 L54.40 315.14 L55.20 314.46 L56.00 314.74 L56.80 315.55 L57.60 315.37 L58.40 315.15 L59.20 315.15 L60.00 315.03 L60.80 315.19 L61.60 315.28 L62.40 314.78 L63.20 315.40 L64.00 315.24 L64.80 315.24 L65.60 314.88 L66.40 314.94 L67.20 315.42 L68.00 314.60 L68.80 315.51 L69.60 315.14 L70.40 315.01 L71.20 314.84 L72.00 315.09 L72.80 315.20 L73.60 315.39 L74.40 315.19 L75.20 315.40 L76.00 315.45 L76.80 315.24 L77.60 315.36 L78.40 314.76 L79.20 315.39 L80.00 314.55 L80.80 314.90 L81.60 314.77 L82.40 315.41 L83.20 315.13 L84.00 315.24 L84.80 315.42 L85.60 315.01 L86.40 314.79 L87.20 315.11 L88.00 314.67 L88.80 315.12 L89.60 314.50 L90.40 314.80 L91.20 315.44 L92.00 314.96 L92.80 315.16 L93.60 315.07 L94.40 315.48 L95.20 314.92 L96.00 314.71 L96.80 315.53 L97.60 315.05 L98.40 314.91 L99.20 314.47 L100.00 315.15 L100.80 315.14 L101.60 315.20 L102.40 315.23 L103.20 314.47 L104.00 315.19 L104.80 314.73 L105.60 315.10 L106.40 314.85 L107.20 314.86 L108.00 314.78 L108.80 314.50 L109.60 313.68 L110.40 314.19 L111.20 315.33 L112.00 314.66 L112.80 315.22 L113.60 314.80 L114.40 315.37 L115.20 315.39 L116.00 314.82 L116.80 315.42 L117.60 314.70 L118.40 315.03 L119.20 315.34 L120.00 314.65 L120.80 315.34 L121.60 315.34 L122.40 314.59 L123.20 315.32 L124.00 314.83 L124.80 314.91 L125.60 315.46 L126.40 314.46 L127.20 315.42 L128.00 314.93 L128.80 315.47 L129.60 315.27 L130.40 315.18 L131.20 314.77 L132.00 314.70 L132.80 315.10 L133.60 315.34 L134.40 315.44 L135.20 315.47 L136.00 315.44 L136.80 314.46 L137.60 314.64 L138.40 315.18 L139.20 314.91 L140.00 315.12 L140.80 314.73 L141.60 314.97 L142.40 314.84 L143.20 315.04 L144.00 314.64 L144.80 315.46 L145.60 315.36 L146.40 315.14 L147.20 314.50 L148.00 314.75 L148.80 314.92 L149.60 315.30 L150.40 314.51 L151.20 314.59 L152.00 315.52 L152.80 314.54 L153.60 314.80 L154.40 314.84 L155.20 315.10 L156.00 314.66 L156.80 314.19 L157.60 313.77 L158.40 313.07 L159.20 314.46 L160.00 315.31 L160.80 315.33 L161.60 314.92 L162.40 315.00 L163.20 314.91 L164.00 314.96 L164.80 315.04 L165.60 314.53 L166.40 314.92 L167.20 315.48 L168.00 315.44 L168.80 314.74 L169.60 314.59 L170.40 315.18 L171.20 315.32 L172.00 315.26 L172.80 314.56 L173.60 314.46 L174.40 315.30 L175.20 314.55 L176.00 315.42 L176.80 314.48 L177.60 314.58 L178.40 315.19 L179.20 315.50 L180.00 315.33 L180.80 315.29 L181.60 315.24 L182.40 315.27 L183.20 314.52 L184.00 315.07 L184.80 314.72 L185.60 314.72 L186.40 315.28 L187.20 314.85 L188.00 314.84 L188.80 314.54 L189.60 315.42 L190.40 314.37 L191.20 313.91 L192.00 314.69 L192.80 314.98 L193.60 315.44 L194.40 314.56 L195.20 315.46 L196.00 314.94 L196.80 314.65 L197.60 314.67 L198.40 314.80 L199.20 315.21 L200.00 314.78 L200.80 314.90 L201.60 315.09 L202.40 314.69 L203.20 314.98 L204.00 314.64 L204.80 314.80 L205.60 314.61 L206.40 314.98 L207.20 314.96 L208.00 315.35 L208.80 314.98 L209.60 315.39 L210.40 315.26 L211.20 314.96 L212.00 314.71 L212.80 315.19 L213.60 315.39 L214.40 314.66 L215.20 314.66 L216.00 315.39 L216.80 313.90 L217.60 313.13 L218.40 312.76 L219.20 311.22 L220.00 310.61 L220.80 310.10 L221.60 309.24 L222.40 309.69 L223.20 309.42 L224.00 310.22 L224.80 309.75 L225.60 309.43 L226.40 309.23 L227.20 310.09 L228.00 310.10 L228.80 309.90 L229.60 309.35 L230.40 309.73 L231.20 309.28 L232.00 309.19 L232.80 307.81 L233.60 307.08 L234.40 308.20 L235.20 308.90 L236.00 309.58 L236.80 309.04 L237.60 309.55 L238.40 309.83 L239.20 309.15 L240.00 308.26 L240.80 307.05 L241.60 305.73 L242.40 306.69 L243.20 308.67 L244.00 309.49 L244.80 308.95 L245.60 309.60 L246.40 309.18 L247.20 309.45 L248.00 308.95 L248.80 309.17 L249.60 308.94 L250.40 308.66 L251.20 308.63 L252.00 309.36 L252.80 308.69 L253.60 308.93 L254.40 309.35 L255.20 309.09 L256.00 308.86 L256.80 308.99 L257.60 308.62 L258.40 309.24 L259.20 309.25 L260.00 309.40 L260.80 308.95 L261.60 309.02 L262.40 309.07 L263.20 309.25 L264.00 308.95 L264.80 308.28 L265.60 308.99 L266.40 308.83 L267.20 308.45 L268.00 308.27 L268.80 308.93 L269.60 308.83 L270.40 309.18 L271.20 309.06 L272.00 308.23 L272.80 308.43 L273.60 308.75 L274.40 308.51 L275.20 308.91 L276.00 309.08 L276.80 309.15 L277.60 308.93 L278.40 309.00 L279.20 309.05 L280.00 308.93 L280.80 308.22 L281.60 308.18 L282.40 308.26 L283.20 308.85 L284.00 308.54 L284.80 308.41 L285.60 308.90 L286.40 308.26 L287.20 308.85 L288.00 308.47 L288.80 308.71 L289.60 308.06 L290.40 308.91 L291.20 308.56 L292.00 308.28 L292.80 308.49 L293.60 308.08 L294.40 308.24 L295.20 308.12 L296.00 308.54 L296.80 308.83 L297.60 308.50 L298.40 308.09 L299.20 308.30 L300.00 308.58 L300.80 308.75 L301.60 308.20 L302.40 308.87 L303.20 308.94 L304.00 309.11 L304.80 308.36 L305.60 308.99 L306.40 308.48 L307.20 308.85 L308.00 308.76 L308.80 308.15 L309.60 308.31 L310.40 308.19 L311.20 309.13 L312.00 309.22 L312.80 309.04 L313.60 309.20 L314.40 308.51 L315.20 309.22 L316.00 308.51 L316.80 308.33 L317.60 308.58 L318.40 309.24 L319.20 308.16 L320.00 304.72 L320.80 301.27 L321.60 304.28 L322.40 308.25 L323.20 308.59 L324.00 309.10 L324.80 309.10 L325.60 308.86 L326.40 309.12 L327.20 308.87 L328.00 309.11 L328.80 308.65 L329.60 309.11 L330.40 309.37 L331.20 309.42 L332.00 308.81 L332.80 308.54 L333.60 309.53 L334.40 309.12 L335.20 308.60 L336.00 308.79 L336.80 308.71 L337.60 309.20 L338.40 308.83 L339.20 308.83 L340.00 309.07 L340.80 309.29 L341.60 309.23 L342.40 308.86 L343.20 309.59 L344.00 308.73 L344.80 308.94 L345.60 308.83 L346.40 309.00 L347.20 309.45 L348.00 309.63 L348.80 309.19 L349.60 309.32 L350.40 309.77 L351.20 309.77 L352.00 309.48 L352.80 309.71 L353.60 309.31 L354.40 309.03 L355.20 309.78 L356.00 308.12 L356.80 303.44 L357.60 301.16 L358.40 303.78 L359.20 303.79 L360.00 301.12 L360.80 305.08 L361.60 308.03 L362.40 307.19 L363.20 305.89 L364.00 306.35 L364.80 307.96 L365.60 310.00 L366.40 314.27 L367.20 314.15 L368.00 315.04 L368.80 314.82 L369.60 314.29 L370.40 314.55 L371.20 314.63 L372.00 315.07 L372.80 314.36 L373.60 314.70 L374.40 314.42 L375.20 315.02 L376.00 315.33 L376.80 314.66 L377.60 309.26 L378.40 305.50 L379.20 310.65 L380.00 314.56 L380.80 315.23 L381.60 314.58 L382.40 315.14 L383.20 314.39 L384.00 314.84 L384.80 314.31 L385.60 315.10 L386.40 315.33 L387.20 315.33 L388.00 314.45 L388.80 314.73 L389.60 314.31 L390.40 314.35 L391.20 314.52 L392.00 314.71 L392.80 314.30 L393.60 314.94 L394.40 315.25 L395.20 314.52 L396.00 315.08 L396.80 314.81 L397.60 314.86 L398.40 314.44 L399.20 314.96 L400.00 315.25 L400.00 325.40 Z" fill="#1b5ca6" fill-opacity="1.0"/>
<path d="M52.80 325.40 L52.80 323.44 L53.60 323.48 L54.40 323.05 L55.20 323.67 L56.00 323.19 L56.80 323.38 L57.60 323.38 L58.40 323.12 L59.20 323.69 L60.00 323.59 L60.80 323.05 L61.60 323.47 L62.40 323.02 L63.20 323.38 L64.00 323.70 L64.80 323.74 L65.60 323.64 L66.40 323.75 L67.20 323.08 L68.00 323.17 L68.80 323.35 L69.60 323.24 L70.40 323.31 L71.20 323.47 L72.00 323.72 L72.80 323.74 L73.60 323.79 L74.40 323.13 L75.20 323.77 L76.00 323.46 L76.80 323.17 L77.60 323.46 L78.40 323.05 L79.20 323.79 L80.00 323.64 L80.80 323.12 L81.60 323.62 L82.40 323.04 L83.20 323.04 L84.00 323.26 L84.80 323.78 L85.60 323.80 L86.40 323.06 L87.20 323.03 L88.00 323.33 L88.80 323.12 L89.60 323.69 L90.40 323.77 L91.20 323.30 L92.00 323.42 L92.80 323.48 L93.60 323.50 L94.40 323.41 L95.20 323.58 L96.00 323.24 L96.80 323.42 L97.60 323.01 L98.40 323.46 L99.20 323.49 L100.00 323.05 L100.80 323.37 L101.60 323.28 L102.40 323.59 L103.20 323.05 L104.00 323.77 L104.80 323.37 L105.60 323.26 L106.40 323.25 L107.20 323.48 L108.00 323.30 L108.80 322.42 L109.60 322.54 L110.40 322.73 L111.20 323.19 L112.00 323.35 L112.80 323.08 L113.60 323.27 L114.40 323.35 L115.20 323.14 L116.00 323.52 L116.80 323.36 L117.60 323.10 L118.40 323.15 L119.20 323.67 L120.00 323.22 L120.80 323.51 L121.60 323.28 L122.40 323.23 L123.20 323.22 L124.00 323.33 L124.80 323.33 L125.60 323.12 L126.40 323.75 L127.20 323.79 L128.00 323.76 L128.80 323.18 L129.60 323.67 L130.40 323.42 L131.20 323.27 L132.00 323.05 L132.80 323.23 L133.60 323.04 L134.40 323.55 L135.20 323.72 L136.00 323.46 L136.80 323.60 L137.60 323.24 L138.40 323.42 L139.20 323.75 L140.00 323.27 L140.80 323.69 L141.60 323.63 L142.40 323.16 L143.20 323.65 L144.00 323.63 L144.80 323.64 L145.60 323.01 L146.40 323.69 L147.20 323.22 L148.00 323.42 L148.80 323.38 L149.60 323.00 L150.40 323.10 L151.20 323.05 L152.00 323.68 L152.80 323.40 L153.60 323.25 L154.40 323.52 L155.20 323.29 L156.00 323.26 L156.80 323.14 L157.60 322.20 L158.40 322.04 L159.20 323.18 L160.00 323.30 L160.80 323.50 L161.60 323.30 L162.40 323.56 L163.20 323.56 L164.00 323.20 L164.80 323.56 L165.60 323.34 L166.40 323.70 L167.20 323.30 L168.00 323.63 L168.80 323.37 L169.60 323.65 L170.40 323.71 L171.20 323.53 L172.00 323.45 L172.80 323.47 L173.60 323.11 L174.40 323.04 L175.20 323.08 L176.00 323.14 L176.80 323.67 L177.60 323.68 L178.40 323.67 L179.20 323.46 L180.00 323.03 L180.80 323.41 L181.60 323.09 L182.40 323.75 L183.20 323.26 L184.00 323.66 L184.80 323.14 L185.60 323.49 L186.40 323.31 L187.20 323.32 L188.00 323.33 L188.80 323.40 L189.60 323.26 L190.40 322.45 L191.20 322.63 L192.00 323.04 L192.80 323.51 L193.60 323.12 L194.40 323.60 L195.20 323.41 L196.00 323.58 L196.80 323.21 L197.60 323.47 L198.40 323.19 L199.20 323.76 L200.00 323.56 L200.80 323.68 L201.60 323.21 L202.40 323.02 L203.20 323.31 L204.00 323.29 L204.80 323.62 L205.60 323.79 L206.40 323.48 L207.20 323.67 L208.00 323.45 L208.80 323.58 L209.60 323.32 L210.40 323.77 L211.20 323.18 L212.00 323.57 L212.80 323.77 L213.60 323.19 L214.40 323.21 L215.20 323.56 L216.00 323.72 L216.80 322.67 L217.60 321.29 L218.40 320.00 L219.20 319.57 L220.00 318.17 L220.80 317.40 L221.60 316.85 L222.40 316.94 L223.20 316.99 L224.00 316.81 L224.80 316.56 L225.60 316.97 L226.40 317.12 L227.20 316.46 L228.00 316.66 L228.80 316.94 L229.60 316.84 L230.40 316.92 L231.20 316.85 L232.00 316.14 L232.80 314.99 L233.60 314.66 L234.40 315.56 L235.20 315.80 L236.00 316.59 L236.80 316.77 L237.60 316.14 L238.40 316.12 L239.20 316.56 L240.00 315.53 L240.80 314.49 L241.60 313.54 L242.40 314.88 L243.20 315.65 L244.00 316.12 L244.80 316.12 L245.60 315.82 L246.40 315.96 L247.20 316.02 L248.00 316.04 L248.80 316.31 L249.60 316.35 L250.40 315.86 L251.20 315.72 L252.00 316.19 L252.80 315.73 L253.60 316.16 L254.40 316.14 L255.20 315.64 L256.00 315.65 L256.80 315.93 L257.60 315.66 L258.40 315.46 L259.20 316.13 L260.00 315.71 L260.80 315.85 L261.60 316.15 L262.40 315.59 L263.20 315.72 L264.00 315.90 L264.80 315.92 L265.60 315.68 L266.40 315.64 L267.20 315.68 L268.00 315.64 L268.80 315.58 L269.60 315.98 L270.40 315.30 L271.20 315.68 L272.00 315.46 L272.80 315.22 L273.60 315.89 L274.40 315.83 L275.20 315.23 L276.00 315.59 L276.80 315.68 L277.60 315.37 L278.40 315.83 L279.20 315.43 L280.00 315.46 L280.80 315.09 L281.60 315.21 L282.40 315.44 L283.20 315.47 L284.00 315.55 L284.80 315.40 L285.60 315.34 L286.40 315.74 L287.20 315.31 L288.00 315.43 L288.80 315.19 L289.60 315.17 L290.40 315.12 L291.20 315.16 L292.00 315.14 L292.80 315.13 L293.60 315.09 L294.40 315.39 L295.20 315.02 L296.00 315.33 L296.80 315.04 L297.60 315.32 L298.40 315.78 L299.20 315.09 L300.00 315.15 L300.80 315.30 L301.60 315.07 L302.40 315.25 L303.20 315.41 L304.00 315.28 L304.80 315.26 L305.60 315.56 L306.40 315.14 L307.20 315.85 L308.00 315.08 L308.80 315.16 L309.60 315.13 L310.40 315.63 L311.20 315.28 L312.00 315.51 L312.80 315.87 L313.60 315.18 L314.40 315.65 L315.20 315.24 L316.00 315.87 L316.80 315.51 L317.60 315.76 L318.40 315.37 L319.20 315.16 L320.00 312.37 L320.80 309.56 L321.60 312.14 L322.40 315.02 L323.20 315.46 L324.00 315.82 L324.80 315.66 L325.60 315.49 L326.40 315.41 L327.20 316.01 L328.00 315.50 L328.80 316.12 L329.60 316.17 L330.40 315.84 L331.20 316.09 L332.00 315.82 L332.80 315.87 L333.60 315.65 L334.40 315.68 L335.20 316.13 L336.00 315.67 L336.80 316.17 L337.60 315.69 L338.40 316.47 L339.20 316.17 L340.00 316.37 L340.80 316.40 L341.60 315.94 L342.40 315.88 L343.20 315.93 L344.00 316.64 L344.80 316.61 L345.60 316.29 L346.40 316.60 L347.20 316.48 L348.00 316.69 L348.80 316.50 L349.60 316.13 L350.40 316.54 L351.20 316.26 L352.00 316.49 L352.80 316.21 L353.60 316.56 L354.40 316.64 L355.20 316.57 L356.00 315.55 L356.80 312.21 L357.60 309.85 L358.40 312.09 L359.20 312.35 L360.00 310.22 L360.80 313.46 L361.60 315.86 L362.40 314.89 L363.20 313.98 L364.00 314.00 L364.80 315.30 L365.60 317.07 L366.40 322.35 L367.20 321.68 L368.00 322.34 L368.80 322.61 L369.60 322.70 L370.40 322.45 L371.20 322.69 L372.00 322.33 L372.80 322.34 L373.60 322.16 L374.40 322.71 L375.20 322.88 L376.00 322.80 L376.80 322.23 L377.60 318.47 L378.40 315.53 L379.20 319.78 L380.00 322.47 L380.80 322.75 L381.60 322.29 L382.40 322.11 L383.20 322.52 L384.00 322.23 L384.80 322.26 L385.60 322.47 L386.40 322.73 L387.20 322.13 L388.00 322.11 L388.80 322.37 L389.60 322.54 L390.40 322.35 L391.20 322.74 L392.00 322.31 L392.80 322.44 L393.60 322.64 L394.40 322.75 L395.20 322.21 L396.00 322.73 L396.80 322.76 L397.60 322.32 L398.40 322.11 L399.20 322.82 L400.00 322.47 L400.00 325.40 Z" fill="#43acd6" fill-opacity="1.0"/>
<path d="M469.80 325.40 L469.80 321.59 L470.60 321.67 L471.40 321.71 L472.20 321.81 L473.00 321.67 L473.80 321.80 L474.60 321.17 L475.40 321.48 L476.20 321.81 L477.00 321.60 L477.80 321.78 L478.60 321.23 L479.40 321.48 L480.20 321.32 L481.00 321.53 L481.80 321.55 L482.60 321.16 L483.40 321.30 L484.20 321.35 L485.00 321.79 L485.80 321.69 L486.60 321.26 L487.40 320.51 L488.20 320.05 L489.00 320.38 L489.80 320.04 L490.60 319.95 L491.40 320.56 L492.20 320.10 L493.00 320.10 L493.80 320.64 L494.60 320.56 L495.40 320.15 L496.20 320.62 L497.00 320.33 L497.80 320.42 L498.60 320.09 L499.40 320.61 L500.20 320.43 L501.00 320.63 L501.80 320.58 L502.60 320.16 L503.40 320.20 L504.20 320.07 L505.00 320.05 L505.80 320.00 L506.60 320.16 L507.40 320.37 L508.20 319.95 L509.00 320.42 L509.80 320.19 L510.60 320.17 L511.40 320.52 L512.20 321.69 L513.00 321.57 L513.80 321.69 L514.60 321.84 L515.40 321.39 L516.20 322.03 L517.00 321.37 L517.80 321.87 L518.60 321.94 L519.40 321.36 L520.20 321.90 L521.00 321.61 L521.80 321.75 L522.60 321.36 L523.40 321.38 L524.20 321.48 L525.00 322.02 L525.80 321.49 L526.60 321.88 L527.40 322.00 L528.20 322.01 L529.00 321.59 L529.80 321.60 L530.60 321.72 L531.40 321.89 L532.20 321.43 L533.00 321.87 L533.80 321.91 L534.60 321.95 L535.40 321.38 L536.20 322.01 L537.00 321.41 L537.80 321.59 L538.60 321.78 L539.40 321.99 L540.20 321.59 L541.00 322.00 L541.80 321.73 L542.60 321.57 L543.40 321.57 L544.20 321.47 L545.00 321.40 L545.80 321.45 L546.60 321.83 L547.40 322.05 L548.20 321.46 L549.00 321.38 L549.80 322.04 L550.60 321.72 L551.40 321.63 L552.20 321.52 L553.00 321.77 L553.80 321.93 L554.60 321.67 L555.40 321.65 L556.20 321.39 L557.00 321.99 L557.80 321.37 L558.60 321.70 L559.40 321.94 L560.20 321.44 L561.00 321.86 L561.80 322.01 L562.60 321.79 L563.40 321.90 L564.20 321.42 L565.00 321.65 L565.80 321.45 L566.60 321.94 L567.40 321.56 L568.20 321.67 L569.00 322.05 L569.80 321.95 L570.60 322.03 L571.40 321.67 L572.20 321.69 L573.00 321.86 L573.80 321.69 L574.60 321.55 L575.40 321.63 L576.20 321.45 L577.00 321.61 L577.80 322.04 L578.60 322.02 L579.40 321.79 L580.20 321.70 L581.00 321.59 L581.80 321.41 L582.60 321.54 L583.40 321.90 L584.20 321.96 L585.00 321.60 L585.80 321.90 L586.60 321.89 L587.40 321.84 L588.20 321.81 L589.00 321.88 L589.80 321.60 L590.60 321.84 L591.40 321.55 L592.20 321.69 L593.00 321.89 L593.80 321.83 L594.60 321.56 L595.40 322.01 L596.20 321.80 L597.00 321.76 L597.80 321.36 L598.60 321.73 L599.40 321.53 L600.20 321.82 L601.00 321.67 L601.80 321.92 L602.60 321.80 L603.40 321.91 L604.20 321.59 L605.00 321.80 L605.80 321.87 L606.60 321.93 L607.40 321.60 L608.20 321.94 L609.00 321.96 L609.80 321.83 L610.60 322.03 L611.40 322.02 L612.20 321.71 L613.00 321.72 L613.80 321.47 L614.60 321.94 L615.40 322.01 L616.20 321.68 L617.00 321.83 L617.80 321.85 L618.60 321.86 L619.40 321.47 L620.20 321.90 L621.00 321.76 L621.80 321.82 L622.60 321.64 L623.40 321.79 L624.20 321.89 L625.00 321.80 L625.80 321.85 L626.60 321.37 L627.40 321.46 L628.20 321.66 L629.00 321.81 L629.80 321.50 L630.60 321.83 L631.40 321.79 L632.20 321.38 L633.00 321.68 L633.80 321.51 L634.60 320.87 L635.40 320.23 L636.20 319.67 L637.00 318.88 L637.80 318.87 L638.60 318.75 L639.40 319.04 L640.20 318.97 L641.00 319.12 L641.80 319.10 L642.60 318.84 L643.40 319.30 L644.20 318.65 L645.00 318.92 L645.80 318.83 L646.60 318.91 L647.40 318.69 L648.20 319.18 L649.00 318.85 L649.80 318.60 L650.60 318.99 L651.40 318.62 L652.20 318.92 L653.00 318.77 L653.80 318.93 L654.60 319.18 L655.40 319.07 L656.20 318.78 L657.00 319.05 L657.80 318.92 L658.60 318.71 L659.40 318.54 L660.20 318.85 L661.00 318.82 L661.80 319.08 L662.60 319.08 L663.40 318.82 L664.20 318.63 L665.00 318.99 L665.80 318.36 L666.60 318.42 L667.40 318.73 L668.20 318.76 L669.00 318.41 L669.80 318.74 L670.60 318.92 L671.40 318.55 L672.20 318.57 L673.00 318.42 L673.80 318.45 L674.60 318.92 L675.40 318.49 L676.20 318.89 L677.00 318.85 L677.80 318.61 L678.60 318.37 L679.40 318.86 L680.20 317.46 L681.00 316.19 L681.80 314.91 L682.60 314.17 L683.40 312.61 L684.20 313.36 L685.00 314.68 L685.80 315.37 L686.60 316.58 L687.40 317.31 L688.20 317.01 L689.00 317.01 L689.80 316.69 L690.60 316.28 L691.40 316.97 L692.20 317.11 L693.00 317.89 L693.80 318.11 L694.60 318.05 L695.40 318.14 L696.20 318.05 L697.00 318.63 L697.80 318.13 L698.60 318.34 L699.40 318.23 L700.20 317.90 L701.00 314.95 L701.80 312.12 L702.60 313.13 L703.40 316.48 L704.20 318.05 L705.00 318.20 L705.80 318.05 L706.60 318.01 L707.40 318.16 L708.20 318.11 L709.00 318.02 L709.80 318.28 L710.60 318.16 L711.40 317.76 L712.20 317.90 L713.00 318.03 L713.80 318.35 L714.60 318.32 L715.40 318.07 L716.20 317.68 L717.00 318.21 L717.80 317.95 L718.60 318.04 L719.40 318.12 L720.20 318.06 L721.00 317.94 L721.80 318.23 L722.60 317.86 L723.40 317.85 L724.20 318.16 L725.00 317.69 L725.80 317.75 L726.60 318.11 L727.40 317.57 L728.20 318.09 L729.00 317.98 L729.80 317.79 L730.60 317.68 L731.40 318.01 L732.20 318.09 L733.00 317.54 L733.80 317.77 L734.60 317.81 L735.40 317.76 L736.20 317.63 L737.00 312.09 L737.80 304.65 L738.60 304.80 L739.40 312.00 L740.20 317.51 L741.00 317.91 L741.80 317.88 L742.60 317.78 L743.40 317.32 L744.20 317.80 L745.00 317.97 L745.80 317.97 L746.60 317.75 L747.40 317.28 L748.20 317.83 L749.00 317.38 L749.80 317.67 L750.60 317.87 L751.40 317.69 L752.20 317.28 L753.00 317.38 L753.80 317.80 L754.60 317.25 L755.40 317.57 L756.20 317.42 L757.00 317.23 L757.80 317.54 L758.60 317.13 L759.40 317.16 L760.20 317.34 L761.00 317.11 L761.80 317.09 L762.60 317.44 L763.40 317.55 L764.20 317.63 L765.00 317.10 L765.80 317.30 L766.60 317.21 L767.40 317.40 L768.20 317.31 L769.00 317.61 L769.80 317.21 L770.60 316.97 L771.40 317.41 L772.20 310.64 L773.00 304.43 L773.80 302.69 L774.60 309.51 L775.40 315.78 L776.20 310.29 L777.00 303.03 L777.80 310.22 L778.60 315.44 L779.40 308.86 L780.20 301.76 L781.00 303.21 L781.80 310.19 L782.60 317.03 L783.40 317.27 L784.20 320.48 L785.00 320.85 L785.80 320.81 L786.60 320.41 L787.40 320.82 L788.20 320.41 L789.00 320.44 L789.80 320.77 L790.60 320.52 L791.40 320.96 L792.20 320.69 L793.00 320.58 L793.80 320.91 L794.60 320.23 L795.40 317.94 L796.20 316.08 L797.00 318.93 L797.80 321.02 L798.60 320.83 L799.40 320.51 L800.20 320.43 L801.00 321.03 L801.80 320.82 L802.60 320.92 L803.40 320.45 L804.20 320.79 L805.00 320.60 L805.80 320.51 L806.60 320.58 L807.40 320.78 L808.20 320.59 L809.00 320.62 L809.80 320.45 L810.60 319.21 L811.40 312.83 L812.20 306.69 L813.00 311.12 L813.80 317.66 L814.60 320.71 L815.40 320.76 L816.20 320.75 L817.00 320.87 L817.00 325.40 Z" fill="#1e62b0" fill-opacity="1.0"/>
<path d="M469.80 325.40 L469.80 321.89 L470.60 321.97 L471.40 322.01 L472.20 322.11 L473.00 321.97 L473.80 322.10 L474.60 321.47 L475.40 321.78 L476.20 322.11 L477.00 321.90 L477.80 322.08 L478.60 321.53 L479.40 321.78 L480.20 321.62 L481.00 321.83 L481.80 321.85 L482.60 321.46 L483.40 321.60 L484.20 321.65 L485.00 322.09 L485.80 321.99 L486.60 321.56 L487.40 320.81 L488.20 320.35 L489.00 320.68 L489.80 320.34 L490.60 320.25 L491.40 320.86 L492.20 320.40 L493.00 320.40 L493.80 320.94 L494.60 320.86 L495.40 320.45 L496.20 320.92 L497.00 320.63 L497.80 320.72 L498.60 320.39 L499.40 320.91 L500.20 320.73 L501.00 320.93 L501.80 320.88 L502.60 320.46 L503.40 320.50 L504.20 320.37 L505.00 320.35 L505.80 320.30 L506.60 320.46 L507.40 320.67 L508.20 320.25 L509.00 320.72 L509.80 320.49 L510.60 320.47 L511.40 320.82 L512.20 321.99 L513.00 321.87 L513.80 321.99 L514.60 322.14 L515.40 321.69 L516.20 322.33 L517.00 321.67 L517.80 322.17 L518.60 322.24 L519.40 321.66 L520.20 322.20 L521.00 321.91 L521.80 322.05 L522.60 321.66 L523.40 321.68 L524.20 321.78 L525.00 322.32 L525.80 321.79 L526.60 322.18 L527.40 322.30 L528.20 322.31 L529.00 321.89 L529.80 321.90 L530.60 322.02 L531.40 322.19 L532.20 321.73 L533.00 322.17 L533.80 322.21 L534.60 322.25 L535.40 321.68 L536.20 322.31 L537.00 321.71 L537.80 321.89 L538.60 322.08 L539.40 322.29 L540.20 321.89 L541.00 322.30 L541.80 322.03 L542.60 321.87 L543.40 321.87 L544.20 321.77 L545.00 321.70 L545.80 321.75 L546.60 322.13 L547.40 322.35 L548.20 321.76 L549.00 321.68 L549.80 322.34 L550.60 322.02 L551.40 321.93 L552.20 321.82 L553.00 322.07 L553.80 322.23 L554.60 321.97 L555.40 321.95 L556.20 321.69 L557.00 322.29 L557.80 321.67 L558.60 322.00 L559.40 322.24 L560.20 321.74 L561.00 322.16 L561.80 322.31 L562.60 322.09 L563.40 322.20 L564.20 321.72 L565.00 321.95 L565.80 321.75 L566.60 322.24 L567.40 321.86 L568.20 321.97 L569.00 322.35 L569.80 322.25 L570.60 322.33 L571.40 321.97 L572.20 321.99 L573.00 322.16 L573.80 321.99 L574.60 321.85 L575.40 321.93 L576.20 321.75 L577.00 321.91 L577.80 322.34 L578.60 322.32 L579.40 322.09 L580.20 322.00 L581.00 321.89 L581.80 321.71 L582.60 321.84 L583.40 322.20 L584.20 322.26 L585.00 321.90 L585.80 322.20 L586.60 322.19 L587.40 322.14 L588.20 322.11 L589.00 322.18 L589.80 321.90 L590.60 322.14 L591.40 321.85 L592.20 321.99 L593.00 322.19 L593.80 322.13 L594.60 321.86 L595.40 322.31 L596.20 322.10 L597.00 322.06 L597.80 321.66 L598.60 322.03 L599.40 321.83 L600.20 322.12 L601.00 321.97 L601.80 322.22 L602.60 322.10 L603.40 322.21 L604.20 321.89 L605.00 322.10 L605.80 322.17 L606.60 322.23 L607.40 321.90 L608.20 322.24 L609.00 322.26 L609.80 322.13 L610.60 322.33 L611.40 322.32 L612.20 322.01 L613.00 322.02 L613.80 321.77 L614.60 322.24 L615.40 322.31 L616.20 321.98 L617.00 322.13 L617.80 322.15 L618.60 322.16 L619.40 321.77 L620.20 322.20 L621.00 322.06 L621.80 322.12 L622.60 321.94 L623.40 322.09 L624.20 322.19 L625.00 322.10 L625.80 322.15 L626.60 321.67 L627.40 321.76 L628.20 321.96 L629.00 322.11 L629.80 321.80 L630.60 322.13 L631.40 322.09 L632.20 321.68 L633.00 321.98 L633.80 321.81 L634.60 321.17 L635.40 320.53 L636.20 319.97 L637.00 319.18 L637.80 319.17 L638.60 319.05 L639.40 319.34 L640.20 319.27 L641.00 319.42 L641.80 319.40 L642.60 319.14 L643.40 319.60 L644.20 318.95 L645.00 319.22 L645.80 319.13 L646.60 319.21 L647.40 318.99 L648.20 319.48 L649.00 319.15 L649.80 318.90 L650.60 319.29 L651.40 318.92 L652.20 319.22 L653.00 319.07 L653.80 319.23 L654.60 319.48 L655.40 319.37 L656.20 319.08 L657.00 319.35 L657.80 319.22 L658.60 319.01 L659.40 318.84 L660.20 319.15 L661.00 319.12 L661.80 319.38 L662.60 319.38 L663.40 319.12 L664.20 318.93 L665.00 319.29 L665.80 318.66 L666.60 318.72 L667.40 319.03 L668.20 319.06 L669.00 318.71 L669.80 319.04 L670.60 319.22 L671.40 318.85 L672.20 318.87 L673.00 318.72 L673.80 318.75 L674.60 319.22 L675.40 318.79 L676.20 319.19 L677.00 319.15 L677.80 318.91 L678.60 318.67 L679.40 319.16 L680.20 318.81 L681.00 318.74 L681.80 318.66 L682.60 319.12 L683.40 318.76 L684.20 318.61 L685.00 318.73 L685.80 318.47 L686.60 318.81 L687.40 318.67 L688.20 318.56 L689.00 318.89 L689.80 318.91 L690.60 318.33 L691.40 318.68 L692.20 318.49 L693.00 318.94 L693.80 318.82 L694.60 318.44 L695.40 318.44 L696.20 318.35 L697.00 318.93 L697.80 318.43 L698.60 318.64 L699.40 318.53 L700.20 318.64 L701.00 318.60 L701.80 318.69 L702.60 318.24 L703.40 318.68 L704.20 318.35 L705.00 318.50 L705.80 318.35 L706.60 318.31 L707.40 318.46 L708.20 318.41 L709.00 318.32 L709.80 318.58 L710.60 318.46 L711.40 318.06 L712.20 318.20 L713.00 318.33 L713.80 318.65 L714.60 318.62 L715.40 318.37 L716.20 317.98 L717.00 318.51 L717.80 318.25 L718.60 318.34 L719.40 318.42 L720.20 318.36 L721.00 318.24 L721.80 318.53 L722.60 318.16 L723.40 318.15 L724.20 318.46 L725.00 317.99 L725.80 318.05 L726.60 318.41 L727.40 317.87 L728.20 318.39 L729.00 318.28 L729.80 318.09 L730.60 317.98 L731.40 318.31 L732.20 318.39 L733.00 317.84 L733.80 318.07 L734.60 318.11 L735.40 318.06 L736.20 317.93 L737.00 315.55 L737.80 311.34 L738.60 311.49 L739.40 315.45 L740.20 317.81 L741.00 318.21 L741.80 318.18 L742.60 318.08 L743.40 317.62 L744.20 318.10 L745.00 318.27 L745.80 318.27 L746.60 318.05 L747.40 317.58 L748.20 318.13 L749.00 317.68 L749.80 317.97 L750.60 318.17 L751.40 317.99 L752.20 317.58 L753.00 317.68 L753.80 318.10 L754.60 317.55 L755.40 317.87 L756.20 317.72 L757.00 317.53 L757.80 317.84 L758.60 317.43 L759.40 317.46 L760.20 317.64 L761.00 317.41 L761.80 317.39 L762.60 317.74 L763.40 317.85 L764.20 317.93 L765.00 317.40 L765.80 317.60 L766.60 317.51 L767.40 317.70 L768.20 317.61 L769.00 317.91 L769.80 317.51 L770.60 317.27 L771.40 317.71 L772.20 314.69 L773.00 312.32 L773.80 311.55 L774.60 314.52 L775.40 316.95 L776.20 317.59 L777.00 317.33 L777.80 317.52 L778.60 316.61 L779.40 313.87 L780.20 310.62 L781.00 311.11 L781.80 314.24 L782.60 317.33 L783.40 317.57 L784.20 320.78 L785.00 321.15 L785.80 321.11 L786.60 320.71 L787.40 321.12 L788.20 320.71 L789.00 320.74 L789.80 321.07 L790.60 320.82 L791.40 321.26 L792.20 320.99 L793.00 320.88 L793.80 321.21 L794.60 320.56 L795.40 318.82 L796.20 317.24 L797.00 319.53 L797.80 321.32 L798.60 321.13 L799.40 320.81 L800.20 320.73 L801.00 321.33 L801.80 321.12 L802.60 321.22 L803.40 320.75 L804.20 321.09 L805.00 320.90 L805.80 320.81 L806.60 320.88 L807.40 321.08 L808.20 320.89 L809.00 320.92 L809.80 320.75 L810.60 321.23 L811.40 319.35 L812.20 317.46 L813.00 318.70 L813.80 321.00 L814.60 321.01 L815.40 321.06 L816.20 321.05 L817.00 321.17 L817.00 325.40 Z" fill="#43acd6" fill-opacity="1.0"/>
<path d="M60.00 468.40 L60.00 462.50 L61.55 462.20 L63.10 460.96 L64.65 462.45 L66.20 462.33 L67.75 462.09 L69.30 463.02 L70.85 462.29 L72.40 461.93 L73.95 461.35 L75.50 463.14 L77.05 462.80 L78.60 463.14 L80.15 461.23 L81.70 461.65 L83.25 463.18 L84.80 460.45 L86.35 460.51 L87.90 461.75 L89.45 461.87 L91.00 463.05 L92.55 463.20 L94.10 462.14 L95.65 463.17 L97.20 462.99 L98.75 462.89 L100.30 463.19 L101.85 462.31 L103.40 462.37 L104.95 460.85 L106.50 462.11 L108.05 461.66 L109.60 462.16 L111.15 463.36 L112.70 464.09 L114.25 464.58 L115.80 461.78 L117.35 461.77 L118.90 462.52 L120.45 463.10 L122.00 464.48 L123.55 464.68 L125.10 464.54 L126.65 464.95 L128.20 462.78 L129.75 464.21 L131.30 462.36 L132.85 464.24 L134.40 461.75 L135.95 462.31 L137.50 465.00 L139.05 464.71 L140.60 461.93 L142.15 463.93 L143.70 461.51 L145.25 464.17 L146.80 464.94 L148.35 463.25 L149.90 462.53 L151.45 464.54 L153.00 464.92 L154.55 464.36 L156.10 461.45 L157.65 462.57 L159.20 464.88 L160.75 464.59 L162.30 464.90 L163.85 464.96 L165.40 462.29 L166.95 464.75 L168.50 463.45 L170.05 463.91 L171.60 464.72 L173.15 462.58 L174.70 464.84 L176.25 463.01 L177.80 464.87 L179.35 463.98 L180.90 464.66 L182.45 464.49 L184.00 461.05 L185.55 462.07 L187.10 464.38 L188.65 461.55 L190.20 464.65 L191.75 464.04 L193.30 461.69 L194.85 462.89 L196.40 464.89 L197.95 460.75 L199.50 464.63 L201.05 464.50 L202.60 462.10 L204.15 464.26 L205.70 464.37 L207.25 464.93 L208.80 464.91 L210.35 456.07 L211.90 463.31 L213.45 461.60 L215.00 462.50 L216.55 461.96 L218.10 458.78 L219.65 461.46 L221.20 460.81 L222.75 458.85 L224.30 462.06 L225.85 461.95 L227.40 457.97 L228.95 458.41 L230.50 461.14 L232.05 461.15 L233.60 458.35 L235.15 456.76 L236.70 460.59 L238.25 456.30 L239.80 456.61 L241.35 458.24 L242.90 459.01 L244.45 459.93 L246.00 459.15 L247.55 450.47 L249.10 458.61 L250.65 456.22 L252.20 458.48 L253.75 455.31 L255.30 456.77 L256.85 458.24 L258.40 458.61 L259.95 455.85 L261.50 458.79 L263.05 458.34 L264.60 456.75 L266.15 454.72 L267.70 456.33 L269.25 458.02 L270.80 454.07 L272.35 458.22 L273.90 458.60 L275.45 457.92 L277.00 457.07 L278.55 458.45 L280.10 453.14 L281.65 457.35 L283.20 456.19 L284.75 458.17 L286.30 457.27 L287.85 453.74 L289.40 452.93 L290.95 455.43 L292.50 455.14 L294.05 455.83 L295.60 457.92 L297.15 458.10 L298.70 458.09 L300.25 449.19 L301.80 454.81 L303.35 452.63 L304.90 457.96 L306.45 455.15 L308.00 456.11 L309.55 454.37 L311.10 456.91 L312.65 451.98 L314.20 457.69 L315.75 455.52 L317.30 454.10 L318.85 452.69 L320.40 454.01 L321.95 454.23 L323.50 448.46 L325.05 452.35 L326.60 456.39 L328.15 454.20 L329.70 452.34 L331.25 452.56 L332.80 455.89 L334.35 453.17 L335.90 452.48 L337.45 454.78 L339.00 454.36 L340.55 455.91 L342.10 454.59 L343.65 447.35 L345.20 457.03 L346.75 454.04 L348.30 450.84 L349.85 451.90 L351.40 453.20 L352.95 455.58 L354.50 453.05 L356.05 454.24 L357.60 455.16 L359.15 452.00 L360.70 456.70 L362.25 446.70 L363.80 456.74 L365.35 453.84 L366.90 454.67 L368.45 456.04 L370.00 452.93 L371.55 454.44 L373.10 453.53 L374.65 450.71 L376.20 455.76 L377.75 456.47 L379.30 455.46 L380.85 452.80 L382.40 455.86 L383.95 455.95 L385.50 450.52 L387.05 444.78 L388.60 454.40 L390.15 450.51 L391.70 455.04 L393.25 452.56 L394.80 455.61 L396.35 447.29 L397.90 451.14 L399.45 449.99 L399.45 468.40 Z" fill="#1c5fa9" fill-opacity="1.0"/>
<line x1="222" y1="467.7" x2="366" y2="467.7" stroke="#3b9fd4" stroke-width="0.7"/>
<line x1="366" y1="467.8" x2="401" y2="467.8" stroke="#2f86c4" stroke-width="0.6"/>
<path d="M888.79 87.90 L888.79 74.62 L890.84 75.31 L893.58 73.53 L896.31 71.61 L898.64 68.47 L900.42 74.62 L903.84 77.36 L906.57 75.99 L909.03 70.79 L911.36 76.68 L913.41 74.62 L916.83 77.36 L919.70 78.04 L920.39 70.25 L920.94 70.25 L921.76 78.73 L923.67 79.41 L924.49 66.69 L925.45 66.69 L926.41 77.36 L928.46 79.41 L931.20 76.68 L934.34 73.26 L936.67 78.04 L938.72 80.78 L940.77 78.04 L943.51 79.41 L945.56 78.73 L948.30 80.78 L950.76 77.09 L953.08 79.41 L955.41 75.03 L957.19 76.68 L958.97 75.31 L961.29 79.41 L963.07 75.03 L966.08 76.40 L969.50 78.73 L972.92 79.41 L974.97 78.04 L977.71 80.37 L980.44 78.04 L982.77 79.41 L985.23 78.04 L987.97 76.68 L990.70 74.35 L992.76 78.73 L995.90 74.62 L997.54 77.36 L999.60 79.82 L1002.33 78.45 L1005.07 77.36 L1006.44 79.41 L1008.76 71.20 L1010.54 76.68 L1012.59 78.04 L1016.01 74.62 L1018.75 76.27 L1020.80 74.35 L1023.53 75.99 L1026.27 75.31 L1026.27 87.90 Z" fill="#1c5fa9" fill-opacity="1.0"/>
<path d="M888.79 74.62 L890.84 75.31 L893.58 73.53 L896.31 71.61 L898.64 68.47 L900.42 74.62 L903.84 77.36 L906.57 75.99 L909.03 70.79 L911.36 76.68 L913.41 74.62 L916.83 77.36 L919.70 78.04 L920.39 70.25 L920.94 70.25 L921.76 78.73 L923.67 79.41 L924.49 66.69 L925.45 66.69 L926.41 77.36 L928.46 79.41 L931.20 76.68 L934.34 73.26 L936.67 78.04 L938.72 80.78 L940.77 78.04 L943.51 79.41 L945.56 78.73 L948.30 80.78 L950.76 77.09 L953.08 79.41 L955.41 75.03 L957.19 76.68 L958.97 75.31 L961.29 79.41 L963.07 75.03 L966.08 76.40 L969.50 78.73 L972.92 79.41 L974.97 78.04 L977.71 80.37 L980.44 78.04 L982.77 79.41 L985.23 78.04 L987.97 76.68 L990.70 74.35 L992.76 78.73 L995.90 74.62 L997.54 77.36 L999.60 79.82 L1002.33 78.45 L1005.07 77.36 L1006.44 79.41 L1008.76 71.20 L1010.54 76.68 L1012.59 78.04 L1016.01 74.62 L1018.75 76.27 L1020.80 74.35 L1023.53 75.99 L1026.27 75.31" fill="none" stroke="#6ea2ae" stroke-width="0.7"/>
<rect x="901.6" y="229.5" width="130" height="1.0" fill="#2a7496"/>
<path d="M1003.6 230.2 L1004.6 215 L1005 208.4 L1005.5 216 L1006.6 230.2 Z" fill="#2b9fd0"/>
<rect x="919" y="228.6" width="1.6" height="1.4" fill="#2f8fb8"/>
<rect x="962.5" y="228.6" width="1.6" height="1.4" fill="#2f8fb8"/>
<rect x="971" y="228.6" width="1.6" height="1.4" fill="#2f8fb8"/>
<rect x="984" y="228.6" width="1.6" height="1.4" fill="#2f8fb8"/>
<path d="M895.00 373.10 L895.00 372.00 L896.50 371.92 L898.00 371.35 L899.50 370.32 L901.00 371.89 L902.50 371.92 L904.00 371.73 L905.50 370.00 L907.00 371.88 L908.50 365.58 L910.00 370.41 L911.50 371.89 L913.00 370.89 L914.50 371.18 L916.00 371.29 L917.50 368.82 L919.00 371.94 L920.50 372.00 L922.00 369.12 L923.50 371.32 L925.00 371.80 L926.50 371.51 L928.00 371.42 L929.50 369.04 L931.00 371.77 L932.50 371.76 L934.00 370.71 L935.50 370.85 L937.00 369.05 L938.50 369.63 L940.00 367.95 L941.50 371.79 L943.00 369.64 L944.50 370.43 L946.00 372.00 L947.50 371.05 L949.00 370.74 L950.50 371.23 L952.00 371.88 L953.50 370.91 L955.00 371.06 L956.50 371.90 L958.00 371.25 L959.50 371.88 L961.00 371.99 L962.50 371.75 L964.00 371.75 L965.50 371.67 L967.00 371.24 L968.50 370.82 L970.00 370.50 L971.50 370.46 L973.00 370.42 L974.50 370.93 L976.00 371.85 L977.50 371.94 L979.00 371.51 L980.50 371.61 L982.00 371.44 L983.50 371.98 L985.00 371.93 L986.50 371.04 L988.00 371.54 L989.50 371.41 L991.00 371.98 L992.50 371.77 L994.00 371.06 L995.50 371.47 L997.00 370.92 L998.50 371.93 L1000.00 371.71 L1001.50 371.25 L1003.00 371.72 L1004.50 371.26 L1006.00 371.59 L1007.50 371.97 L1009.00 371.98 L1010.50 370.93 L1012.00 371.97 L1013.50 371.93 L1015.00 371.83 L1016.50 371.38 L1018.00 371.16 L1019.50 371.69 L1021.00 371.66 L1022.50 371.27 L1024.00 371.88 L1025.50 371.79 L1027.00 371.52 L1028.50 371.49 L1030.00 372.00 L1030.00 373.10 Z" fill="#1f5f9f" fill-opacity="1.0"/>
<path d="M895.00 372.00 L896.50 371.92 L898.00 371.35 L899.50 370.32 L901.00 371.89 L902.50 371.92 L904.00 371.73 L905.50 370.00 L907.00 371.88 L908.50 365.58 L910.00 370.41 L911.50 371.89 L913.00 370.89 L914.50 371.18 L916.00 371.29 L917.50 368.82 L919.00 371.94 L920.50 372.00 L922.00 369.12 L923.50 371.32 L925.00 371.80 L926.50 371.51 L928.00 371.42 L929.50 369.04 L931.00 371.77 L932.50 371.76 L934.00 370.71 L935.50 370.85 L937.00 369.05 L938.50 369.63 L940.00 367.95 L941.50 371.79 L943.00 369.64 L944.50 370.43 L946.00 372.00 L947.50 371.05 L949.00 370.74 L950.50 371.23 L952.00 371.88 L953.50 370.91 L955.00 371.06 L956.50 371.90 L958.00 371.25 L959.50 371.88 L961.00 371.99 L962.50 371.75 L964.00 371.75 L965.50 371.67 L967.00 371.24 L968.50 370.82 L970.00 370.50 L971.50 370.46 L973.00 370.42 L974.50 370.93 L976.00 371.85 L977.50 371.94 L979.00 371.51 L980.50 371.61 L982.00 371.44 L983.50 371.98 L985.00 371.93 L986.50 371.04 L988.00 371.54 L989.50 371.41 L991.00 371.98 L992.50 371.77 L994.00 371.06 L995.50 371.47 L997.00 370.92 L998.50 371.93 L1000.00 371.71 L1001.50 371.25 L1003.00 371.72 L1004.50 371.26 L1006.00 371.59 L1007.50 371.97 L1009.00 371.98 L1010.50 370.93 L1012.00 371.97 L1013.50 371.93 L1015.00 371.83 L1016.50 371.38 L1018.00 371.16 L1019.50 371.69 L1021.00 371.66 L1022.50 371.27 L1024.00 371.88 L1025.50 371.79 L1027.00 371.52 L1028.50 371.49 L1030.00 372.00" fill="none" stroke="#3f8fb0" stroke-width="0.7"/>
</svg>
</body></html>
